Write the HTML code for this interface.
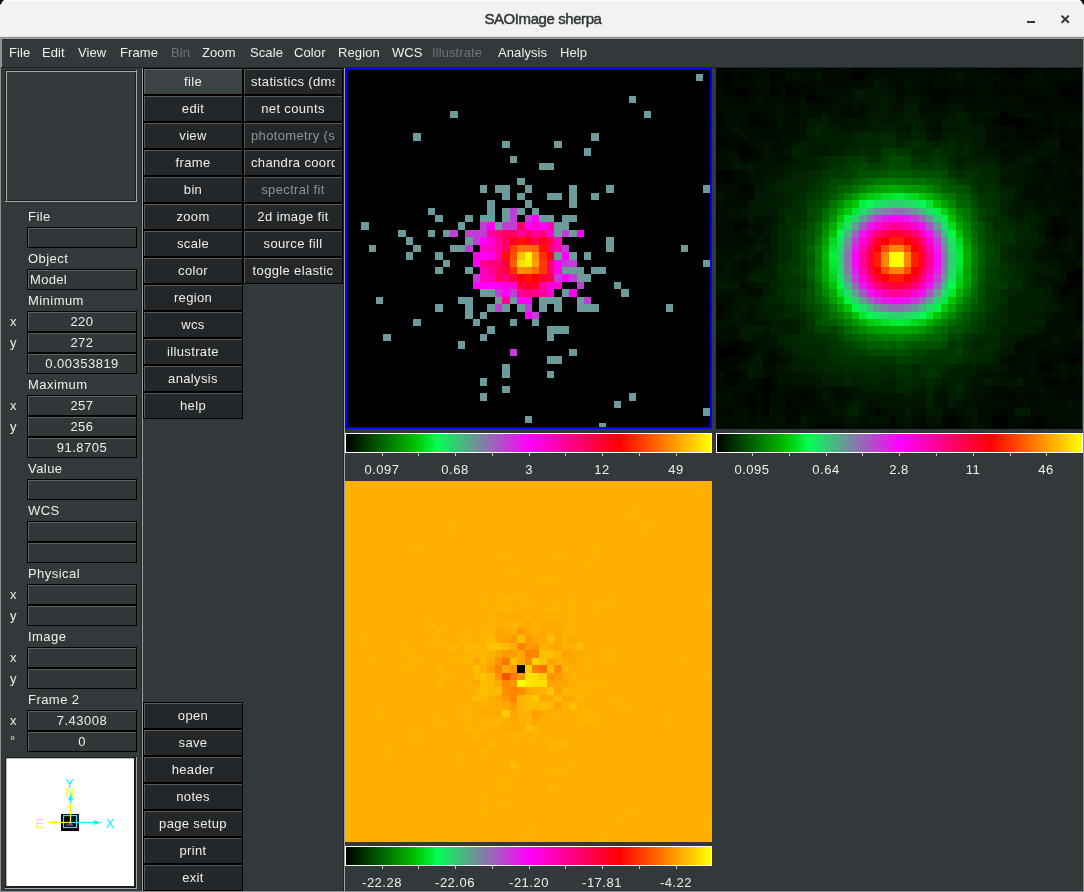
<!DOCTYPE html>
<html><head><meta charset="utf-8"><style>
html,body{margin:0;padding:0;width:1084px;height:892px;overflow:hidden;background:#000;}
body{position:relative;font-family:"Liberation Sans", sans-serif;-webkit-font-smoothing:antialiased;}
.t{will-change:transform;}
body div, body svg{position:absolute;}
div div{position:absolute;}
</style></head><body>
<div style="left:0px;top:0px;width:1084px;height:38px;background:#f2f2f2;"></div><div style="left:0px;top:0px;width:1084px;height:1px;background:#ffffff;"></div><svg style="left:0;top:0" width="1084" height="6"><path d="M0 0H4.2Q1.5 1.2 1 4.2L0 4.5Z" fill="#000"/><path d="M1084 0H1079.8Q1082.5 1.2 1083 4.2L1084 4.5Z" fill="#000"/></svg><div class="t" style="left:392.5px;width:300px;text-align:center;top:11.30px;font-size:15px;line-height:15px;color:#2e3436;letter-spacing:-0.42px;font-weight:normal;-webkit-text-stroke:0.45px #2e3436;">SAOImage sherpa</div><div style="left:1027px;top:21px;width:8px;height:2px;background:#2e3436;"></div><svg style="left:1060px;top:14px" width="11" height="11"><path d="M1.6 1.6L8.8 8.8M8.8 1.6L1.6 8.8" stroke="#2e3436" stroke-width="2"/></svg><div style="left:0px;top:36px;width:1084px;height:1px;background:#e8e8e6;"></div><div style="left:0px;top:37px;width:1084px;height:1px;background:#8b8b87;"></div><div style="left:0px;top:38px;width:1084px;height:854px;background:#33393b;"></div><div style="left:0px;top:38px;width:1px;height:854px;background:#8e8e8e;"></div><div style="left:1083px;top:38px;width:1px;height:854px;background:#8e8e8e;"></div><div style="left:0px;top:891px;width:1084px;height:1px;background:#8e8e8e;"></div><div style="left:1px;top:38px;width:1px;height:30px;background:#9a9a9a;"></div><div style="left:1px;top:38px;width:1082px;height:1px;background:#a2a6a7;"></div><div style="left:2px;top:39px;width:1081px;height:1px;background:#2c3133;"></div><div style="left:2px;top:40px;width:1081px;height:27px;background:#33393b;"></div><div style="left:1px;top:67px;width:1082px;height:1px;background:#1f2426;"></div><div class="t" style="left:9.2px;top:46.00px;font-size:13px;line-height:13px;color:#eeeeec;letter-spacing:0.1px;font-weight:normal;">File</div><div class="t" style="left:42.0px;top:46.00px;font-size:13px;line-height:13px;color:#eeeeec;letter-spacing:0.1px;font-weight:normal;">Edit</div><div class="t" style="left:78.2px;top:46.00px;font-size:13px;line-height:13px;color:#eeeeec;letter-spacing:0.1px;font-weight:normal;">View</div><div class="t" style="left:119.5px;top:46.00px;font-size:13px;line-height:13px;color:#eeeeec;letter-spacing:0.1px;font-weight:normal;">Frame</div><div class="t" style="left:171.0px;top:46.00px;font-size:13px;line-height:13px;color:#6f7374;letter-spacing:0.1px;font-weight:normal;">Bin</div><div class="t" style="left:202.29999999999998px;top:46.00px;font-size:13px;line-height:13px;color:#eeeeec;letter-spacing:0.1px;font-weight:normal;">Zoom</div><div class="t" style="left:249.5px;top:46.00px;font-size:13px;line-height:13px;color:#eeeeec;letter-spacing:0.1px;font-weight:normal;">Scale</div><div class="t" style="left:294.2px;top:46.00px;font-size:13px;line-height:13px;color:#eeeeec;letter-spacing:0.1px;font-weight:normal;">Color</div><div class="t" style="left:337.7px;top:46.00px;font-size:13px;line-height:13px;color:#eeeeec;letter-spacing:0.1px;font-weight:normal;">Region</div><div class="t" style="left:391.5px;top:46.00px;font-size:13px;line-height:13px;color:#eeeeec;letter-spacing:0.1px;font-weight:normal;">WCS</div><div class="t" style="left:432.09999999999997px;top:46.00px;font-size:13px;line-height:13px;color:#6f7374;letter-spacing:0.1px;font-weight:normal;">Illustrate</div><div class="t" style="left:498.4px;top:46.00px;font-size:13px;line-height:13px;color:#eeeeec;letter-spacing:0.1px;font-weight:normal;">Analysis</div><div class="t" style="left:559.6px;top:46.00px;font-size:13px;line-height:13px;color:#eeeeec;letter-spacing:0.1px;font-weight:normal;">Help</div><div style="left:5px;top:70px;width:132px;height:132px;background:#a4a8a9;"></div><div style="left:5px;top:70px;width:131px;height:131px;background:#1b1f20;"></div><div style="left:6px;top:71px;width:130px;height:130px;background:#a4a8a9;"></div><div style="left:7px;top:72px;width:129px;height:129px;background:#1b1f20;"></div><div style="left:7px;top:72px;width:128px;height:128px;background:#33393b;"></div><div class="t" style="left:28px;top:210.00px;font-size:13px;line-height:13px;color:#eeeeec;letter-spacing:0.45px;font-weight:normal;">File</div><div class="t" style="left:28px;top:252.00px;font-size:13px;line-height:13px;color:#eeeeec;letter-spacing:0.45px;font-weight:normal;">Object</div><div class="t" style="left:28px;top:294.00px;font-size:13px;line-height:13px;color:#eeeeec;letter-spacing:0.45px;font-weight:normal;">Minimum</div><div class="t" style="left:28px;top:378.00px;font-size:13px;line-height:13px;color:#eeeeec;letter-spacing:0.45px;font-weight:normal;">Maximum</div><div class="t" style="left:28px;top:462.00px;font-size:13px;line-height:13px;color:#eeeeec;letter-spacing:0.45px;font-weight:normal;">Value</div><div class="t" style="left:28px;top:504.00px;font-size:13px;line-height:13px;color:#eeeeec;letter-spacing:0.45px;font-weight:normal;">WCS</div><div class="t" style="left:28px;top:567.00px;font-size:13px;line-height:13px;color:#eeeeec;letter-spacing:0.45px;font-weight:normal;">Physical</div><div class="t" style="left:28px;top:630.00px;font-size:13px;line-height:13px;color:#eeeeec;letter-spacing:0.45px;font-weight:normal;">Image</div><div class="t" style="left:28px;top:693.00px;font-size:13px;line-height:13px;color:#eeeeec;letter-spacing:0.45px;font-weight:normal;">Frame 2</div><div style="left:27px;top:227px;width:110px;height:21px;background:#000000;"></div><div style="left:28px;top:228px;width:108px;height:19px;background:#5b6062;"></div><div style="left:29px;top:229px;width:107px;height:18px;background:#313638;"></div><div style="left:27px;top:269px;width:110px;height:21px;background:#000000;"></div><div style="left:28px;top:270px;width:108px;height:19px;background:#5b6062;"></div><div style="left:29px;top:271px;width:107px;height:18px;background:#313638;"></div><div class="t" style="left:30px;top:273.00px;font-size:13px;line-height:13px;color:#eeeeec;letter-spacing:0.3px;font-weight:normal;">Model</div><div style="left:27px;top:311px;width:110px;height:21px;background:#000000;"></div><div style="left:28px;top:312px;width:108px;height:19px;background:#5b6062;"></div><div style="left:29px;top:313px;width:107px;height:18px;background:#313638;"></div><div class="t" style="left:-68px;width:300px;text-align:center;top:315.00px;font-size:13px;line-height:13px;color:#eeeeec;letter-spacing:0.5px;font-weight:normal;">220</div><div style="left:27px;top:332px;width:110px;height:21px;background:#000000;"></div><div style="left:28px;top:333px;width:108px;height:19px;background:#5b6062;"></div><div style="left:29px;top:334px;width:107px;height:18px;background:#313638;"></div><div class="t" style="left:-68px;width:300px;text-align:center;top:336.00px;font-size:13px;line-height:13px;color:#eeeeec;letter-spacing:0.5px;font-weight:normal;">272</div><div style="left:27px;top:353px;width:110px;height:21px;background:#000000;"></div><div style="left:28px;top:354px;width:108px;height:19px;background:#5b6062;"></div><div style="left:29px;top:355px;width:107px;height:18px;background:#313638;"></div><div class="t" style="left:-68px;width:300px;text-align:center;top:357.00px;font-size:13px;line-height:13px;color:#eeeeec;letter-spacing:0.5px;font-weight:normal;">0.00353819</div><div style="left:27px;top:395px;width:110px;height:21px;background:#000000;"></div><div style="left:28px;top:396px;width:108px;height:19px;background:#5b6062;"></div><div style="left:29px;top:397px;width:107px;height:18px;background:#313638;"></div><div class="t" style="left:-68px;width:300px;text-align:center;top:399.00px;font-size:13px;line-height:13px;color:#eeeeec;letter-spacing:0.5px;font-weight:normal;">257</div><div style="left:27px;top:416px;width:110px;height:21px;background:#000000;"></div><div style="left:28px;top:417px;width:108px;height:19px;background:#5b6062;"></div><div style="left:29px;top:418px;width:107px;height:18px;background:#313638;"></div><div class="t" style="left:-68px;width:300px;text-align:center;top:420.00px;font-size:13px;line-height:13px;color:#eeeeec;letter-spacing:0.5px;font-weight:normal;">256</div><div style="left:27px;top:437px;width:110px;height:21px;background:#000000;"></div><div style="left:28px;top:438px;width:108px;height:19px;background:#5b6062;"></div><div style="left:29px;top:439px;width:107px;height:18px;background:#313638;"></div><div class="t" style="left:-68px;width:300px;text-align:center;top:441.00px;font-size:13px;line-height:13px;color:#eeeeec;letter-spacing:0.5px;font-weight:normal;">91.8705</div><div style="left:27px;top:479px;width:110px;height:21px;background:#000000;"></div><div style="left:28px;top:480px;width:108px;height:19px;background:#5b6062;"></div><div style="left:29px;top:481px;width:107px;height:18px;background:#313638;"></div><div style="left:27px;top:521px;width:110px;height:21px;background:#000000;"></div><div style="left:28px;top:522px;width:108px;height:19px;background:#5b6062;"></div><div style="left:29px;top:523px;width:107px;height:18px;background:#313638;"></div><div style="left:27px;top:542px;width:110px;height:21px;background:#000000;"></div><div style="left:28px;top:543px;width:108px;height:19px;background:#5b6062;"></div><div style="left:29px;top:544px;width:107px;height:18px;background:#313638;"></div><div style="left:27px;top:584px;width:110px;height:21px;background:#000000;"></div><div style="left:28px;top:585px;width:108px;height:19px;background:#5b6062;"></div><div style="left:29px;top:586px;width:107px;height:18px;background:#313638;"></div><div style="left:27px;top:605px;width:110px;height:21px;background:#000000;"></div><div style="left:28px;top:606px;width:108px;height:19px;background:#5b6062;"></div><div style="left:29px;top:607px;width:107px;height:18px;background:#313638;"></div><div style="left:27px;top:647px;width:110px;height:21px;background:#000000;"></div><div style="left:28px;top:648px;width:108px;height:19px;background:#5b6062;"></div><div style="left:29px;top:649px;width:107px;height:18px;background:#313638;"></div><div style="left:27px;top:668px;width:110px;height:21px;background:#000000;"></div><div style="left:28px;top:669px;width:108px;height:19px;background:#5b6062;"></div><div style="left:29px;top:670px;width:107px;height:18px;background:#313638;"></div><div style="left:27px;top:710px;width:110px;height:21px;background:#000000;"></div><div style="left:28px;top:711px;width:108px;height:19px;background:#5b6062;"></div><div style="left:29px;top:712px;width:107px;height:18px;background:#313638;"></div><div class="t" style="left:-68px;width:300px;text-align:center;top:714.00px;font-size:13px;line-height:13px;color:#eeeeec;letter-spacing:0.5px;font-weight:normal;">7.43008</div><div style="left:27px;top:731px;width:110px;height:21px;background:#000000;"></div><div style="left:28px;top:732px;width:108px;height:19px;background:#5b6062;"></div><div style="left:29px;top:733px;width:107px;height:18px;background:#313638;"></div><div class="t" style="left:-68px;width:300px;text-align:center;top:735.00px;font-size:13px;line-height:13px;color:#eeeeec;letter-spacing:0.5px;font-weight:normal;">0</div><div class="t" style="left:10px;top:315.00px;font-size:13px;line-height:13px;color:#eeeeec;letter-spacing:0px;font-weight:normal;">x</div><div class="t" style="left:10px;top:336.00px;font-size:13px;line-height:13px;color:#eeeeec;letter-spacing:0px;font-weight:normal;">y</div><div class="t" style="left:10px;top:399.00px;font-size:13px;line-height:13px;color:#eeeeec;letter-spacing:0px;font-weight:normal;">x</div><div class="t" style="left:10px;top:420.00px;font-size:13px;line-height:13px;color:#eeeeec;letter-spacing:0px;font-weight:normal;">y</div><div class="t" style="left:10px;top:588.00px;font-size:13px;line-height:13px;color:#eeeeec;letter-spacing:0px;font-weight:normal;">x</div><div class="t" style="left:10px;top:609.00px;font-size:13px;line-height:13px;color:#eeeeec;letter-spacing:0px;font-weight:normal;">y</div><div class="t" style="left:10px;top:651.00px;font-size:13px;line-height:13px;color:#eeeeec;letter-spacing:0px;font-weight:normal;">x</div><div class="t" style="left:10px;top:672.00px;font-size:13px;line-height:13px;color:#eeeeec;letter-spacing:0px;font-weight:normal;">y</div><div class="t" style="left:10px;top:714.00px;font-size:13px;line-height:13px;color:#eeeeec;letter-spacing:0px;font-weight:normal;">x</div><div class="t" style="left:10px;top:734.00px;font-size:13px;line-height:13px;color:#eeeeec;letter-spacing:0px;font-weight:normal;">°</div><div style="left:5px;top:757px;width:132px;height:132px;background:#a4a8a9;"></div><div style="left:5px;top:757px;width:131px;height:131px;background:#1b1f20;"></div><div style="left:6px;top:758px;width:128px;height:128px;background:#b8bcbd;"></div><div style="left:7px;top:759px;width:127px;height:127px;background:#ffffff;"></div><svg style="left:0;top:740px" width="140" height="100">
<rect x="61" y="74" width="18" height="17" fill="#000"/>
<rect x="63.5" y="75.5" width="13" height="12" fill="none" stroke="#00ffff" stroke-width="1.2"/>
<path d="M70.5 82.5H101" stroke="#00ffff" stroke-width="1.3"/>
<path d="M94 80.5L98.5 82.5L94 84.5Z" fill="#00ffff" stroke="#00ffff" stroke-width="1"/>
<path d="M70.5 63V51.5" stroke="#00ffff" stroke-width="1.3"/>
<path d="M68.5 59.5L70.5 55.5L72.5 59.5Z" fill="#00ffff" stroke="#00ffff" stroke-width="1"/>
<path d="M70.5 82.5H48" stroke="#ffff00" stroke-width="1.3"/>
<path d="M55.5 80.5L51 82.5L55.5 84.5Z" fill="#ffff00" stroke="#ffff00" stroke-width="1"/>
<path d="M70.5 82.5V63" stroke="#ffff00" stroke-width="1.3"/>
<path d="M68.5 67.5L70.5 63.5L72.5 67.5Z" fill="#ffff00" stroke="#ffff00" stroke-width="1"/>
<path d="M66 85H73" stroke="#8a9aa0" stroke-width="1"/>
<rect x="69" y="83" width="3" height="2" fill="#ff00ff"/>
<text x="106" y="88" font-size="12.5" fill="#00ffff" font-family="Liberation Sans">X</text>
<text x="35.5" y="88" font-size="12.5" fill="#ffff00" font-family="Liberation Sans">E</text>
<text x="65.5" y="57" font-size="12.5" fill="#ffff00" font-family="Liberation Sans">N</text>
<text x="65.5" y="48" font-size="12.5" fill="#00ffff" font-family="Liberation Sans">Y</text>
</svg><div style="left:141px;top:68px;width:1px;height:823px;background:#23282a;"></div><div style="left:142px;top:68px;width:1px;height:823px;background:#9ea2a3;"></div><div style="left:143px;top:68px;width:100px;height:27px;background:#000000;"></div><div style="left:144px;top:69px;width:98px;height:25px;background:#63686a;"></div><div style="left:145px;top:70px;width:97px;height:24px;background:#3d4245;"></div><div class="t" style="left:43.0px;width:300px;text-align:center;top:74.70px;font-size:13px;line-height:13px;color:#eeeeec;letter-spacing:0.35px;font-weight:normal;">file</div><div style="left:143px;top:95px;width:100px;height:27px;background:#000000;"></div><div style="left:144px;top:96px;width:98px;height:25px;background:#565a5c;"></div><div style="left:145px;top:97px;width:97px;height:24px;background:#232729;"></div><div class="t" style="left:43.0px;width:300px;text-align:center;top:101.70px;font-size:13px;line-height:13px;color:#eeeeec;letter-spacing:0.35px;font-weight:normal;">edit</div><div style="left:143px;top:122px;width:100px;height:27px;background:#000000;"></div><div style="left:144px;top:123px;width:98px;height:25px;background:#565a5c;"></div><div style="left:145px;top:124px;width:97px;height:24px;background:#232729;"></div><div class="t" style="left:43.0px;width:300px;text-align:center;top:128.70px;font-size:13px;line-height:13px;color:#eeeeec;letter-spacing:0.35px;font-weight:normal;">view</div><div style="left:143px;top:149px;width:100px;height:27px;background:#000000;"></div><div style="left:144px;top:150px;width:98px;height:25px;background:#565a5c;"></div><div style="left:145px;top:151px;width:97px;height:24px;background:#232729;"></div><div class="t" style="left:43.0px;width:300px;text-align:center;top:155.70px;font-size:13px;line-height:13px;color:#eeeeec;letter-spacing:0.35px;font-weight:normal;">frame</div><div style="left:143px;top:176px;width:100px;height:27px;background:#000000;"></div><div style="left:144px;top:177px;width:98px;height:25px;background:#565a5c;"></div><div style="left:145px;top:178px;width:97px;height:24px;background:#232729;"></div><div class="t" style="left:43.0px;width:300px;text-align:center;top:182.70px;font-size:13px;line-height:13px;color:#eeeeec;letter-spacing:0.35px;font-weight:normal;">bin</div><div style="left:143px;top:203px;width:100px;height:27px;background:#000000;"></div><div style="left:144px;top:204px;width:98px;height:25px;background:#565a5c;"></div><div style="left:145px;top:205px;width:97px;height:24px;background:#232729;"></div><div class="t" style="left:43.0px;width:300px;text-align:center;top:209.70px;font-size:13px;line-height:13px;color:#eeeeec;letter-spacing:0.35px;font-weight:normal;">zoom</div><div style="left:143px;top:230px;width:100px;height:27px;background:#000000;"></div><div style="left:144px;top:231px;width:98px;height:25px;background:#565a5c;"></div><div style="left:145px;top:232px;width:97px;height:24px;background:#232729;"></div><div class="t" style="left:43.0px;width:300px;text-align:center;top:236.70px;font-size:13px;line-height:13px;color:#eeeeec;letter-spacing:0.35px;font-weight:normal;">scale</div><div style="left:143px;top:257px;width:100px;height:27px;background:#000000;"></div><div style="left:144px;top:258px;width:98px;height:25px;background:#565a5c;"></div><div style="left:145px;top:259px;width:97px;height:24px;background:#232729;"></div><div class="t" style="left:43.0px;width:300px;text-align:center;top:263.70px;font-size:13px;line-height:13px;color:#eeeeec;letter-spacing:0.35px;font-weight:normal;">color</div><div style="left:143px;top:284px;width:100px;height:27px;background:#000000;"></div><div style="left:144px;top:285px;width:98px;height:25px;background:#565a5c;"></div><div style="left:145px;top:286px;width:97px;height:24px;background:#232729;"></div><div class="t" style="left:43.0px;width:300px;text-align:center;top:290.70px;font-size:13px;line-height:13px;color:#eeeeec;letter-spacing:0.35px;font-weight:normal;">region</div><div style="left:143px;top:311px;width:100px;height:27px;background:#000000;"></div><div style="left:144px;top:312px;width:98px;height:25px;background:#565a5c;"></div><div style="left:145px;top:313px;width:97px;height:24px;background:#232729;"></div><div class="t" style="left:43.0px;width:300px;text-align:center;top:317.70px;font-size:13px;line-height:13px;color:#eeeeec;letter-spacing:0.35px;font-weight:normal;">wcs</div><div style="left:143px;top:338px;width:100px;height:27px;background:#000000;"></div><div style="left:144px;top:339px;width:98px;height:25px;background:#565a5c;"></div><div style="left:145px;top:340px;width:97px;height:24px;background:#232729;"></div><div class="t" style="left:43.0px;width:300px;text-align:center;top:344.70px;font-size:13px;line-height:13px;color:#eeeeec;letter-spacing:0.35px;font-weight:normal;">illustrate</div><div style="left:143px;top:365px;width:100px;height:27px;background:#000000;"></div><div style="left:144px;top:366px;width:98px;height:25px;background:#565a5c;"></div><div style="left:145px;top:367px;width:97px;height:24px;background:#232729;"></div><div class="t" style="left:43.0px;width:300px;text-align:center;top:371.70px;font-size:13px;line-height:13px;color:#eeeeec;letter-spacing:0.35px;font-weight:normal;">analysis</div><div style="left:143px;top:392px;width:100px;height:27px;background:#000000;"></div><div style="left:144px;top:393px;width:98px;height:25px;background:#565a5c;"></div><div style="left:145px;top:394px;width:97px;height:24px;background:#232729;"></div><div class="t" style="left:43.0px;width:300px;text-align:center;top:398.70px;font-size:13px;line-height:13px;color:#eeeeec;letter-spacing:0.35px;font-weight:normal;">help</div><div style="left:243px;top:68px;width:100px;height:27px;background:#000000;"></div><div style="left:244px;top:69px;width:98px;height:25px;background:#565a5c;"></div><div style="left:245px;top:70px;width:97px;height:24px;background:#232729;"></div><div style="left:251px;top:68px;width:84px;height:27px;overflow:hidden"><div class="t" style="left:0px;top:6.70px;font-size:13px;line-height:13px;color:#eeeeec;letter-spacing:0.35px;white-space:nowrap">statistics (dms</div></div><div style="left:243px;top:95px;width:100px;height:27px;background:#000000;"></div><div style="left:244px;top:96px;width:98px;height:25px;background:#565a5c;"></div><div style="left:245px;top:97px;width:97px;height:24px;background:#232729;"></div><div class="t" style="left:143.0px;width:300px;text-align:center;top:101.70px;font-size:13px;line-height:13px;color:#eeeeec;letter-spacing:0.35px;font-weight:normal;">net counts</div><div style="left:243px;top:122px;width:100px;height:27px;background:#000000;"></div><div style="left:244px;top:123px;width:98px;height:25px;background:#565a5c;"></div><div style="left:245px;top:124px;width:97px;height:24px;background:#232729;"></div><div style="left:251px;top:122px;width:84px;height:27px;overflow:hidden"><div class="t" style="left:0px;top:6.70px;font-size:13px;line-height:13px;color:#8f9394;letter-spacing:0.35px;white-space:nowrap">photometry (s</div></div><div style="left:243px;top:149px;width:100px;height:27px;background:#000000;"></div><div style="left:244px;top:150px;width:98px;height:25px;background:#565a5c;"></div><div style="left:245px;top:151px;width:97px;height:24px;background:#232729;"></div><div style="left:251px;top:149px;width:84px;height:27px;overflow:hidden"><div class="t" style="left:0px;top:6.70px;font-size:13px;line-height:13px;color:#eeeeec;letter-spacing:0.35px;white-space:nowrap">chandra coord</div></div><div style="left:243px;top:176px;width:100px;height:27px;background:#000000;"></div><div style="left:244px;top:177px;width:98px;height:25px;background:#565a5c;"></div><div style="left:245px;top:178px;width:97px;height:24px;background:#232729;"></div><div class="t" style="left:143.0px;width:300px;text-align:center;top:182.70px;font-size:13px;line-height:13px;color:#8f9394;letter-spacing:0.35px;font-weight:normal;">spectral fit</div><div style="left:243px;top:203px;width:100px;height:27px;background:#000000;"></div><div style="left:244px;top:204px;width:98px;height:25px;background:#565a5c;"></div><div style="left:245px;top:205px;width:97px;height:24px;background:#232729;"></div><div class="t" style="left:143.0px;width:300px;text-align:center;top:209.70px;font-size:13px;line-height:13px;color:#eeeeec;letter-spacing:0.35px;font-weight:normal;">2d image fit</div><div style="left:243px;top:230px;width:100px;height:27px;background:#000000;"></div><div style="left:244px;top:231px;width:98px;height:25px;background:#565a5c;"></div><div style="left:245px;top:232px;width:97px;height:24px;background:#232729;"></div><div class="t" style="left:143.0px;width:300px;text-align:center;top:236.70px;font-size:13px;line-height:13px;color:#eeeeec;letter-spacing:0.35px;font-weight:normal;">source fill</div><div style="left:243px;top:257px;width:100px;height:27px;background:#000000;"></div><div style="left:244px;top:258px;width:98px;height:25px;background:#565a5c;"></div><div style="left:245px;top:259px;width:97px;height:24px;background:#232729;"></div><div class="t" style="left:143.0px;width:300px;text-align:center;top:263.70px;font-size:13px;line-height:13px;color:#eeeeec;letter-spacing:0.35px;font-weight:normal;">toggle elastic</div><div style="left:143px;top:702px;width:100px;height:27px;background:#000000;"></div><div style="left:144px;top:703px;width:98px;height:25px;background:#565a5c;"></div><div style="left:145px;top:704px;width:97px;height:24px;background:#232729;"></div><div class="t" style="left:43.0px;width:300px;text-align:center;top:708.70px;font-size:13px;line-height:13px;color:#eeeeec;letter-spacing:0.35px;font-weight:normal;">open</div><div style="left:143px;top:729px;width:100px;height:27px;background:#000000;"></div><div style="left:144px;top:730px;width:98px;height:25px;background:#565a5c;"></div><div style="left:145px;top:731px;width:97px;height:24px;background:#232729;"></div><div class="t" style="left:43.0px;width:300px;text-align:center;top:735.70px;font-size:13px;line-height:13px;color:#eeeeec;letter-spacing:0.35px;font-weight:normal;">save</div><div style="left:143px;top:756px;width:100px;height:27px;background:#000000;"></div><div style="left:144px;top:757px;width:98px;height:25px;background:#565a5c;"></div><div style="left:145px;top:758px;width:97px;height:24px;background:#232729;"></div><div class="t" style="left:43.0px;width:300px;text-align:center;top:762.70px;font-size:13px;line-height:13px;color:#eeeeec;letter-spacing:0.35px;font-weight:normal;">header</div><div style="left:143px;top:783px;width:100px;height:27px;background:#000000;"></div><div style="left:144px;top:784px;width:98px;height:25px;background:#565a5c;"></div><div style="left:145px;top:785px;width:97px;height:24px;background:#232729;"></div><div class="t" style="left:43.0px;width:300px;text-align:center;top:789.70px;font-size:13px;line-height:13px;color:#eeeeec;letter-spacing:0.35px;font-weight:normal;">notes</div><div style="left:143px;top:810px;width:100px;height:27px;background:#000000;"></div><div style="left:144px;top:811px;width:98px;height:25px;background:#565a5c;"></div><div style="left:145px;top:812px;width:97px;height:24px;background:#232729;"></div><div class="t" style="left:43.0px;width:300px;text-align:center;top:816.70px;font-size:13px;line-height:13px;color:#eeeeec;letter-spacing:0.35px;font-weight:normal;">page setup</div><div style="left:143px;top:837px;width:100px;height:27px;background:#000000;"></div><div style="left:144px;top:838px;width:98px;height:25px;background:#565a5c;"></div><div style="left:145px;top:839px;width:97px;height:24px;background:#232729;"></div><div class="t" style="left:43.0px;width:300px;text-align:center;top:843.70px;font-size:13px;line-height:13px;color:#eeeeec;letter-spacing:0.35px;font-weight:normal;">print</div><div style="left:143px;top:864px;width:100px;height:27px;background:#000000;"></div><div style="left:144px;top:865px;width:98px;height:25px;background:#565a5c;"></div><div style="left:145px;top:866px;width:97px;height:24px;background:#232729;"></div><div class="t" style="left:43.0px;width:300px;text-align:center;top:870.70px;font-size:13px;line-height:13px;color:#eeeeec;letter-spacing:0.35px;font-weight:normal;">exit</div><div style="left:343px;top:68px;width:1px;height:823px;background:#1f2325;"></div><div style="left:344px;top:68px;width:1px;height:823px;background:#9ea2a3;"></div><div style="left:345px;top:68px;width:367px;height:361px;background:#0000ff;"></div><div style="left:347px;top:70px;width:363px;height:357px;background:#000000;"></div><div style="left:716px;top:68px;width:366px;height:361px;background:#010a01;"></div><div style="left:345px;top:481px;width:367px;height:361px;background:#ffb000;"></div><div style="left:345px;top:433px;width:367px;height:20px;background:#ffffff;"></div><div style="left:346px;top:434px;width:365px;height:18px;background:linear-gradient(to right,#000000 0%,#00c200 19%,#00ff50 25%,#ff00ff 50%,#ff0000 75%,#ffff00 100%);"></div><div style="left:382px;top:453px;width:1px;height:3px;background:#c8cacb;"></div><div style="left:418px;top:453px;width:1px;height:3px;background:#c8cacb;"></div><div style="left:455px;top:453px;width:1px;height:3px;background:#c8cacb;"></div><div style="left:492px;top:453px;width:1px;height:3px;background:#c8cacb;"></div><div style="left:529px;top:453px;width:1px;height:3px;background:#c8cacb;"></div><div style="left:565px;top:453px;width:1px;height:3px;background:#c8cacb;"></div><div style="left:602px;top:453px;width:1px;height:3px;background:#c8cacb;"></div><div style="left:639px;top:453px;width:1px;height:3px;background:#c8cacb;"></div><div style="left:676px;top:453px;width:1px;height:3px;background:#c8cacb;"></div><div class="t" style="left:231.5px;width:300px;text-align:center;top:463.00px;font-size:13px;line-height:13px;color:#eeeeec;letter-spacing:0.5px;font-weight:normal;">0.097</div><div class="t" style="left:305.04px;width:300px;text-align:center;top:463.00px;font-size:13px;line-height:13px;color:#eeeeec;letter-spacing:0.5px;font-weight:normal;">0.68</div><div class="t" style="left:378.58000000000004px;width:300px;text-align:center;top:463.00px;font-size:13px;line-height:13px;color:#eeeeec;letter-spacing:0.5px;font-weight:normal;">3</div><div class="t" style="left:452.12px;width:300px;text-align:center;top:463.00px;font-size:13px;line-height:13px;color:#eeeeec;letter-spacing:0.5px;font-weight:normal;">12</div><div class="t" style="left:525.6600000000001px;width:300px;text-align:center;top:463.00px;font-size:13px;line-height:13px;color:#eeeeec;letter-spacing:0.5px;font-weight:normal;">49</div><div style="left:716px;top:433px;width:367px;height:20px;background:#ffffff;"></div><div style="left:717px;top:434px;width:365px;height:18px;background:linear-gradient(to right,#000000 0%,#00c200 19%,#00ff50 25%,#ff00ff 50%,#ff0000 75%,#ffff00 100%);"></div><div style="left:752px;top:453px;width:1px;height:3px;background:#c8cacb;"></div><div style="left:789px;top:453px;width:1px;height:3px;background:#c8cacb;"></div><div style="left:826px;top:453px;width:1px;height:3px;background:#c8cacb;"></div><div style="left:862px;top:453px;width:1px;height:3px;background:#c8cacb;"></div><div style="left:899px;top:453px;width:1px;height:3px;background:#c8cacb;"></div><div style="left:936px;top:453px;width:1px;height:3px;background:#c8cacb;"></div><div style="left:973px;top:453px;width:1px;height:3px;background:#c8cacb;"></div><div style="left:1010px;top:453px;width:1px;height:3px;background:#c8cacb;"></div><div style="left:1046px;top:453px;width:1px;height:3px;background:#c8cacb;"></div><div class="t" style="left:602.0px;width:300px;text-align:center;top:463.00px;font-size:13px;line-height:13px;color:#eeeeec;letter-spacing:0.5px;font-weight:normal;">0.095</div><div class="t" style="left:675.6px;width:300px;text-align:center;top:463.00px;font-size:13px;line-height:13px;color:#eeeeec;letter-spacing:0.5px;font-weight:normal;">0.64</div><div class="t" style="left:749.2px;width:300px;text-align:center;top:463.00px;font-size:13px;line-height:13px;color:#eeeeec;letter-spacing:0.5px;font-weight:normal;">2.8</div><div class="t" style="left:822.8px;width:300px;text-align:center;top:463.00px;font-size:13px;line-height:13px;color:#eeeeec;letter-spacing:0.5px;font-weight:normal;">11</div><div class="t" style="left:896.4000000000001px;width:300px;text-align:center;top:463.00px;font-size:13px;line-height:13px;color:#eeeeec;letter-spacing:0.5px;font-weight:normal;">46</div><div style="left:345px;top:846px;width:367px;height:20px;background:#ffffff;"></div><div style="left:346px;top:847px;width:365px;height:18px;background:linear-gradient(to right,#000000 0%,#00c200 19%,#00ff50 25%,#ff00ff 50%,#ff0000 75%,#ffff00 100%);"></div><div style="left:382px;top:866px;width:1px;height:3px;background:#c8cacb;"></div><div style="left:418px;top:866px;width:1px;height:3px;background:#c8cacb;"></div><div style="left:455px;top:866px;width:1px;height:3px;background:#c8cacb;"></div><div style="left:492px;top:866px;width:1px;height:3px;background:#c8cacb;"></div><div style="left:529px;top:866px;width:1px;height:3px;background:#c8cacb;"></div><div style="left:565px;top:866px;width:1px;height:3px;background:#c8cacb;"></div><div style="left:602px;top:866px;width:1px;height:3px;background:#c8cacb;"></div><div style="left:639px;top:866px;width:1px;height:3px;background:#c8cacb;"></div><div style="left:676px;top:866px;width:1px;height:3px;background:#c8cacb;"></div><div class="t" style="left:231.5px;width:300px;text-align:center;top:876.00px;font-size:13px;line-height:13px;color:#eeeeec;letter-spacing:0.5px;font-weight:normal;">-22.28</div><div class="t" style="left:305.04px;width:300px;text-align:center;top:876.00px;font-size:13px;line-height:13px;color:#eeeeec;letter-spacing:0.5px;font-weight:normal;">-22.06</div><div class="t" style="left:378.58000000000004px;width:300px;text-align:center;top:876.00px;font-size:13px;line-height:13px;color:#eeeeec;letter-spacing:0.5px;font-weight:normal;">-21.20</div><div class="t" style="left:452.12px;width:300px;text-align:center;top:876.00px;font-size:13px;line-height:13px;color:#eeeeec;letter-spacing:0.5px;font-weight:normal;">-17.81</div><div class="t" style="left:525.6600000000001px;width:300px;text-align:center;top:876.00px;font-size:13px;line-height:13px;color:#eeeeec;letter-spacing:0.5px;font-weight:normal;">-4.22</div><div style="left:347px;top:70px;width:363px;height:357px;overflow:hidden;background:#000000"><svg width="363" height="357" style="position:absolute;left:0;top:0" shape-rendering="crispEdges"><rect x="349" y="4" width="7" height="7" fill="#6b9b9b"/><rect x="282" y="26" width="7" height="7" fill="#6b9b9b"/><rect x="103" y="41" width="8" height="7" fill="#6b9b9b"/><rect x="297" y="41" width="7" height="7" fill="#6b9b9b"/><rect x="66" y="63" width="8" height="8" fill="#6b9b9b"/><rect x="244" y="63" width="8" height="8" fill="#6b9b9b"/><rect x="155" y="71" width="8" height="7" fill="#6b9b9b"/><rect x="207" y="71" width="8" height="7" fill="#6b9b9b"/><rect x="237" y="78" width="7" height="8" fill="#6b9b9b"/><rect x="163" y="86" width="7" height="7" fill="#6b9b9b"/><rect x="192" y="93" width="15" height="7" fill="#6b9b9b"/><rect x="170" y="108" width="8" height="7" fill="#6b9b9b"/><rect x="133" y="115" width="7" height="8" fill="#6b9b9b"/><rect x="148" y="115" width="15" height="8" fill="#6b9b9b"/><rect x="178" y="115" width="7" height="8" fill="#6b9b9b"/><rect x="222" y="115" width="8" height="8" fill="#6b9b9b"/><rect x="259" y="115" width="8" height="8" fill="#6b9b9b"/><rect x="356" y="115" width="7" height="8" fill="#6b9b9b"/><rect x="155" y="123" width="8" height="7" fill="#6b9b9b"/><rect x="170" y="123" width="8" height="7" fill="#6b9b9b"/><rect x="200" y="123" width="15" height="7" fill="#6b9b9b"/><rect x="222" y="123" width="8" height="7" fill="#6b9b9b"/><rect x="244" y="123" width="8" height="7" fill="#6b9b9b"/><rect x="140" y="130" width="8" height="8" fill="#6b9b9b"/><rect x="178" y="130" width="7" height="8" fill="#6b9b9b"/><rect x="222" y="130" width="8" height="8" fill="#6b9b9b"/><rect x="81" y="138" width="7" height="7" fill="#6b9b9b"/><rect x="140" y="138" width="8" height="7" fill="#6b9b9b"/><rect x="155" y="138" width="8" height="7" fill="#6b9b9b"/><rect x="163" y="138" width="7" height="7" fill="#c23dd6"/><rect x="170" y="138" width="8" height="7" fill="#6b9b9b"/><rect x="185" y="138" width="7" height="7" fill="#6b9b9b"/><rect x="88" y="145" width="8" height="7" fill="#6b9b9b"/><rect x="118" y="145" width="8" height="7" fill="#6b9b9b"/><rect x="133" y="145" width="15" height="7" fill="#6b9b9b"/><rect x="155" y="145" width="8" height="7" fill="#6b9b9b"/><rect x="163" y="145" width="7" height="7" fill="#c23dd6"/><rect x="178" y="145" width="7" height="7" fill="#c23dd6"/><rect x="185" y="145" width="7" height="7" fill="#ff00ff"/><rect x="192" y="145" width="15" height="7" fill="#6b9b9b"/><rect x="215" y="145" width="15" height="7" fill="#6b9b9b"/><rect x="14" y="152" width="8" height="8" fill="#6b9b9b"/><rect x="111" y="152" width="7" height="8" fill="#6b9b9b"/><rect x="133" y="152" width="7" height="8" fill="#c23dd6"/><rect x="140" y="152" width="8" height="8" fill="#ff00ff"/><rect x="148" y="152" width="7" height="8" fill="#6b9b9b"/><rect x="155" y="152" width="15" height="8" fill="#c23dd6"/><rect x="170" y="152" width="8" height="8" fill="#ff0066"/><rect x="178" y="152" width="7" height="8" fill="#ff00ff"/><rect x="185" y="152" width="7" height="8" fill="#ff00d0"/><rect x="192" y="152" width="8" height="8" fill="#ff00ff"/><rect x="200" y="152" width="7" height="8" fill="#ff00b0"/><rect x="207" y="152" width="15" height="8" fill="#6b9b9b"/><rect x="51" y="160" width="8" height="7" fill="#6b9b9b"/><rect x="81" y="160" width="7" height="7" fill="#6b9b9b"/><rect x="96" y="160" width="7" height="7" fill="#6b9b9b"/><rect x="103" y="160" width="8" height="7" fill="#c23dd6"/><rect x="118" y="160" width="22" height="7" fill="#c23dd6"/><rect x="140" y="160" width="8" height="7" fill="#ff00a0"/><rect x="148" y="160" width="7" height="7" fill="#ff0080"/><rect x="155" y="160" width="15" height="7" fill="#ff0060"/><rect x="170" y="160" width="8" height="7" fill="#ff00a0"/><rect x="178" y="160" width="7" height="7" fill="#ff0060"/><rect x="185" y="160" width="7" height="7" fill="#ff00a0"/><rect x="192" y="160" width="8" height="7" fill="#ff0080"/><rect x="200" y="160" width="7" height="7" fill="#ff00e0"/><rect x="207" y="160" width="8" height="7" fill="#6b9b9b"/><rect x="215" y="160" width="7" height="7" fill="#c23dd6"/><rect x="222" y="160" width="8" height="7" fill="#6b9b9b"/><rect x="230" y="160" width="7" height="7" fill="#ff00ff"/><rect x="59" y="167" width="7" height="8" fill="#6b9b9b"/><rect x="118" y="167" width="8" height="8" fill="#6b9b9b"/><rect x="126" y="167" width="7" height="8" fill="#c23dd6"/><rect x="133" y="167" width="7" height="8" fill="#ff00ff"/><rect x="140" y="167" width="8" height="8" fill="#ff00d0"/><rect x="148" y="167" width="7" height="8" fill="#ff00a0"/><rect x="155" y="167" width="8" height="8" fill="#ff0060"/><rect x="163" y="167" width="7" height="8" fill="#ff0020"/><rect x="170" y="167" width="8" height="8" fill="#ff1000"/><rect x="178" y="167" width="7" height="8" fill="#ff0020"/><rect x="185" y="167" width="7" height="8" fill="#ff0040"/><rect x="192" y="167" width="8" height="8" fill="#ff0020"/><rect x="200" y="167" width="7" height="8" fill="#ff0050"/><rect x="207" y="167" width="8" height="8" fill="#ff00c0"/><rect x="259" y="167" width="8" height="8" fill="#6b9b9b"/><rect x="22" y="175" width="7" height="7" fill="#6b9b9b"/><rect x="66" y="175" width="8" height="7" fill="#6b9b9b"/><rect x="103" y="175" width="15" height="7" fill="#6b9b9b"/><rect x="118" y="175" width="8" height="7" fill="#c23dd6"/><rect x="133" y="175" width="7" height="7" fill="#ff00d0"/><rect x="140" y="175" width="8" height="7" fill="#ff00c0"/><rect x="148" y="175" width="7" height="7" fill="#ff00a0"/><rect x="155" y="175" width="8" height="7" fill="#ff0060"/><rect x="163" y="175" width="7" height="7" fill="#ff4000"/><rect x="170" y="175" width="15" height="7" fill="#ff7000"/><rect x="185" y="175" width="7" height="7" fill="#ff6000"/><rect x="192" y="175" width="8" height="7" fill="#ff1000"/><rect x="200" y="175" width="7" height="7" fill="#ff0070"/><rect x="207" y="175" width="8" height="7" fill="#ff00b0"/><rect x="215" y="175" width="7" height="7" fill="#c23dd6"/><rect x="259" y="175" width="8" height="7" fill="#6b9b9b"/><rect x="334" y="175" width="7" height="7" fill="#6b9b9b"/><rect x="59" y="182" width="7" height="8" fill="#6b9b9b"/><rect x="88" y="182" width="8" height="8" fill="#6b9b9b"/><rect x="126" y="182" width="7" height="8" fill="#ff00e0"/><rect x="133" y="182" width="7" height="8" fill="#ff00ff"/><rect x="140" y="182" width="8" height="8" fill="#ff00e8"/><rect x="148" y="182" width="7" height="8" fill="#ff00a0"/><rect x="155" y="182" width="8" height="8" fill="#ff1000"/><rect x="163" y="182" width="7" height="8" fill="#ff5000"/><rect x="170" y="182" width="8" height="8" fill="#ffc000"/><rect x="178" y="182" width="7" height="8" fill="#ffff00"/><rect x="185" y="182" width="7" height="8" fill="#ff9000"/><rect x="192" y="182" width="8" height="8" fill="#ff3000"/><rect x="200" y="182" width="7" height="8" fill="#ff0020"/><rect x="207" y="182" width="8" height="8" fill="#6b9b9b"/><rect x="215" y="182" width="7" height="8" fill="#ff00ff"/><rect x="222" y="182" width="8" height="8" fill="#6b9b9b"/><rect x="237" y="182" width="7" height="8" fill="#6b9b9b"/><rect x="96" y="190" width="7" height="7" fill="#6b9b9b"/><rect x="126" y="190" width="7" height="7" fill="#ff00ff"/><rect x="133" y="190" width="7" height="7" fill="#ff0090"/><rect x="140" y="190" width="8" height="7" fill="#ff0080"/><rect x="148" y="190" width="7" height="7" fill="#ff0070"/><rect x="155" y="190" width="8" height="7" fill="#ff0040"/><rect x="163" y="190" width="7" height="7" fill="#ff6000"/><rect x="170" y="190" width="8" height="7" fill="#ffe000"/><rect x="178" y="190" width="7" height="7" fill="#fff000"/><rect x="185" y="190" width="7" height="7" fill="#ffa000"/><rect x="192" y="190" width="8" height="7" fill="#ff3800"/><rect x="200" y="190" width="7" height="7" fill="#ff0070"/><rect x="207" y="190" width="8" height="7" fill="#ff00f0"/><rect x="215" y="190" width="15" height="7" fill="#c23dd6"/><rect x="356" y="190" width="7" height="7" fill="#6b9b9b"/><rect x="88" y="197" width="8" height="7" fill="#6b9b9b"/><rect x="118" y="197" width="8" height="7" fill="#6b9b9b"/><rect x="133" y="197" width="7" height="7" fill="#ff00c0"/><rect x="140" y="197" width="8" height="7" fill="#ff0090"/><rect x="148" y="197" width="7" height="7" fill="#ff0060"/><rect x="155" y="197" width="8" height="7" fill="#ff0040"/><rect x="163" y="197" width="7" height="7" fill="#ff3000"/><rect x="170" y="197" width="8" height="7" fill="#ff9000"/><rect x="178" y="197" width="7" height="7" fill="#ff8800"/><rect x="185" y="197" width="7" height="7" fill="#ff6a00"/><rect x="192" y="197" width="8" height="7" fill="#ff3800"/><rect x="200" y="197" width="7" height="7" fill="#ff0070"/><rect x="207" y="197" width="8" height="7" fill="#ff00f0"/><rect x="215" y="197" width="22" height="7" fill="#6b9b9b"/><rect x="244" y="197" width="15" height="7" fill="#6b9b9b"/><rect x="126" y="204" width="7" height="8" fill="#c23dd6"/><rect x="133" y="204" width="7" height="8" fill="#ff00c0"/><rect x="140" y="204" width="8" height="8" fill="#ff00b0"/><rect x="148" y="204" width="7" height="8" fill="#ff0060"/><rect x="155" y="204" width="8" height="8" fill="#ff0080"/><rect x="163" y="204" width="7" height="8" fill="#ff0040"/><rect x="170" y="204" width="8" height="8" fill="#ff0010"/><rect x="178" y="204" width="7" height="8" fill="#ff1000"/><rect x="185" y="204" width="7" height="8" fill="#ff0008"/><rect x="192" y="204" width="8" height="8" fill="#ff0030"/><rect x="200" y="204" width="7" height="8" fill="#ff0050"/><rect x="207" y="204" width="8" height="8" fill="#c23dd6"/><rect x="215" y="204" width="7" height="8" fill="#ff00ff"/><rect x="222" y="204" width="8" height="8" fill="#c23dd6"/><rect x="230" y="204" width="14" height="8" fill="#6b9b9b"/><rect x="126" y="212" width="29" height="7" fill="#ff00ff"/><rect x="155" y="212" width="15" height="7" fill="#ff00d8"/><rect x="170" y="212" width="8" height="7" fill="#ff0030"/><rect x="178" y="212" width="14" height="7" fill="#ff0020"/><rect x="192" y="212" width="8" height="7" fill="#ff00a0"/><rect x="200" y="212" width="15" height="7" fill="#ff00d8"/><rect x="230" y="212" width="7" height="7" fill="#c23dd6"/><rect x="267" y="212" width="7" height="7" fill="#6b9b9b"/><rect x="133" y="219" width="15" height="8" fill="#6b9b9b"/><rect x="148" y="219" width="7" height="8" fill="#c23dd6"/><rect x="155" y="219" width="8" height="8" fill="#ff00ff"/><rect x="163" y="219" width="7" height="8" fill="#c23dd6"/><rect x="170" y="219" width="8" height="8" fill="#ff0090"/><rect x="178" y="219" width="7" height="8" fill="#ff0070"/><rect x="185" y="219" width="7" height="8" fill="#ff0090"/><rect x="192" y="219" width="8" height="8" fill="#ff00a0"/><rect x="200" y="219" width="7" height="8" fill="#ff00e0"/><rect x="215" y="219" width="7" height="8" fill="#6b9b9b"/><rect x="222" y="219" width="8" height="8" fill="#ff00ff"/><rect x="274" y="219" width="8" height="8" fill="#6b9b9b"/><rect x="29" y="227" width="7" height="7" fill="#6b9b9b"/><rect x="111" y="227" width="15" height="7" fill="#6b9b9b"/><rect x="148" y="227" width="7" height="7" fill="#6b9b9b"/><rect x="155" y="227" width="8" height="7" fill="#ff0090"/><rect x="163" y="227" width="7" height="7" fill="#6b9b9b"/><rect x="170" y="227" width="15" height="7" fill="#ff00ff"/><rect x="192" y="227" width="23" height="7" fill="#6b9b9b"/><rect x="230" y="227" width="7" height="7" fill="#6b9b9b"/><rect x="237" y="227" width="7" height="7" fill="#c23dd6"/><rect x="88" y="234" width="8" height="8" fill="#6b9b9b"/><rect x="118" y="234" width="8" height="8" fill="#6b9b9b"/><rect x="140" y="234" width="8" height="8" fill="#6b9b9b"/><rect x="148" y="234" width="7" height="8" fill="#c23dd6"/><rect x="155" y="234" width="8" height="8" fill="#6b9b9b"/><rect x="170" y="234" width="8" height="8" fill="#6b9b9b"/><rect x="178" y="234" width="7" height="8" fill="#c23dd6"/><rect x="192" y="234" width="8" height="8" fill="#6b9b9b"/><rect x="207" y="234" width="8" height="8" fill="#6b9b9b"/><rect x="230" y="234" width="22" height="8" fill="#6b9b9b"/><rect x="319" y="234" width="7" height="8" fill="#6b9b9b"/><rect x="118" y="242" width="8" height="7" fill="#6b9b9b"/><rect x="133" y="242" width="7" height="7" fill="#6b9b9b"/><rect x="178" y="242" width="7" height="7" fill="#ff00ff"/><rect x="185" y="242" width="7" height="7" fill="#c23dd6"/><rect x="66" y="249" width="8" height="7" fill="#6b9b9b"/><rect x="126" y="249" width="7" height="7" fill="#6b9b9b"/><rect x="163" y="249" width="7" height="7" fill="#6b9b9b"/><rect x="185" y="249" width="7" height="7" fill="#6b9b9b"/><rect x="140" y="256" width="8" height="8" fill="#6b9b9b"/><rect x="200" y="256" width="22" height="8" fill="#6b9b9b"/><rect x="36" y="264" width="8" height="7" fill="#6b9b9b"/><rect x="133" y="264" width="7" height="7" fill="#6b9b9b"/><rect x="200" y="264" width="7" height="7" fill="#6b9b9b"/><rect x="111" y="271" width="7" height="8" fill="#6b9b9b"/><rect x="163" y="279" width="7" height="7" fill="#c23dd6"/><rect x="222" y="279" width="8" height="7" fill="#6b9b9b"/><rect x="200" y="286" width="15" height="8" fill="#6b9b9b"/><rect x="155" y="294" width="8" height="7" fill="#6b9b9b"/><rect x="155" y="301" width="8" height="7" fill="#6b9b9b"/><rect x="200" y="301" width="7" height="7" fill="#6b9b9b"/><rect x="133" y="308" width="7" height="8" fill="#6b9b9b"/><rect x="155" y="316" width="8" height="7" fill="#6b9b9b"/><rect x="133" y="323" width="7" height="8" fill="#6b9b9b"/><rect x="282" y="323" width="7" height="8" fill="#6b9b9b"/><rect x="267" y="331" width="7" height="7" fill="#6b9b9b"/><rect x="356" y="338" width="7" height="8" fill="#6b9b9b"/><rect x="178" y="346" width="7" height="7" fill="#6b9b9b"/><rect x="252" y="353" width="7" height="7" fill="#6b9b9b"/></svg></div><div style="left:716px;top:68px;width:366px;height:361px;overflow:hidden;background:#000000"><svg width="366" height="361" style="position:absolute;left:0;top:0" shape-rendering="crispEdges"><rect x="-5" y="-2" width="14" height="8" fill="#000800"/><rect x="9" y="-2" width="8" height="8" fill="#000400"/><rect x="17" y="-2" width="7" height="8" fill="#000c00"/><rect x="24" y="-2" width="15" height="8" fill="#000800"/><rect x="39" y="-2" width="15" height="8" fill="#000c00"/><rect x="54" y="-2" width="15" height="8" fill="#000800"/><rect x="69" y="-2" width="7" height="8" fill="#000c00"/><rect x="76" y="-2" width="8" height="8" fill="#001000"/><rect x="84" y="-2" width="7" height="8" fill="#000c00"/><rect x="91" y="-2" width="15" height="8" fill="#001000"/><rect x="106" y="-2" width="15" height="8" fill="#000800"/><rect x="121" y="-2" width="15" height="8" fill="#000c00"/><rect x="136" y="-2" width="22" height="8" fill="#000400"/><rect x="158" y="-2" width="7" height="8" fill="#000c00"/><rect x="165" y="-2" width="15" height="8" fill="#000800"/><rect x="180" y="-2" width="45" height="8" fill="#000c00"/><rect x="225" y="-2" width="7" height="8" fill="#000800"/><rect x="232" y="-2" width="15" height="8" fill="#001000"/><rect x="247" y="-2" width="8" height="8" fill="#000c00"/><rect x="255" y="-2" width="7" height="8" fill="#001000"/><rect x="262" y="-2" width="22" height="8" fill="#000800"/><rect x="284" y="-2" width="8" height="8" fill="#000400"/><rect x="299" y="-2" width="8" height="8" fill="#000400"/><rect x="314" y="-2" width="22" height="8" fill="#000800"/><rect x="336" y="-2" width="8" height="8" fill="#000400"/><rect x="344" y="-2" width="15" height="8" fill="#000800"/><rect x="359" y="-2" width="7" height="8" fill="#000c00"/><rect x="-5" y="6" width="7" height="7" fill="#000c00"/><rect x="2" y="6" width="7" height="7" fill="#000800"/><rect x="17" y="6" width="7" height="7" fill="#000800"/><rect x="24" y="6" width="8" height="7" fill="#000400"/><rect x="32" y="6" width="7" height="7" fill="#000800"/><rect x="39" y="6" width="15" height="7" fill="#000c00"/><rect x="54" y="6" width="15" height="7" fill="#000400"/><rect x="69" y="6" width="30" height="7" fill="#001000"/><rect x="99" y="6" width="7" height="7" fill="#001400"/><rect x="106" y="6" width="30" height="7" fill="#000800"/><rect x="143" y="6" width="8" height="7" fill="#000400"/><rect x="151" y="6" width="7" height="7" fill="#000c00"/><rect x="158" y="6" width="15" height="7" fill="#001000"/><rect x="173" y="6" width="7" height="7" fill="#000800"/><rect x="180" y="6" width="8" height="7" fill="#000c00"/><rect x="188" y="6" width="7" height="7" fill="#001000"/><rect x="195" y="6" width="15" height="7" fill="#000c00"/><rect x="210" y="6" width="7" height="7" fill="#000800"/><rect x="217" y="6" width="15" height="7" fill="#000c00"/><rect x="232" y="6" width="8" height="7" fill="#001000"/><rect x="240" y="6" width="7" height="7" fill="#001400"/><rect x="247" y="6" width="8" height="7" fill="#001000"/><rect x="255" y="6" width="22" height="7" fill="#000c00"/><rect x="277" y="6" width="7" height="7" fill="#001000"/><rect x="284" y="6" width="15" height="7" fill="#000800"/><rect x="299" y="6" width="8" height="7" fill="#000400"/><rect x="307" y="6" width="14" height="7" fill="#000c00"/><rect x="321" y="6" width="8" height="7" fill="#001000"/><rect x="329" y="6" width="15" height="7" fill="#000800"/><rect x="344" y="6" width="7" height="7" fill="#000c00"/><rect x="351" y="6" width="8" height="7" fill="#001000"/><rect x="359" y="6" width="7" height="7" fill="#000800"/><rect x="-5" y="13" width="7" height="8" fill="#000c00"/><rect x="2" y="13" width="7" height="8" fill="#000800"/><rect x="9" y="13" width="8" height="8" fill="#000400"/><rect x="17" y="13" width="22" height="8" fill="#000800"/><rect x="39" y="13" width="15" height="8" fill="#001000"/><rect x="54" y="13" width="15" height="8" fill="#000800"/><rect x="69" y="13" width="7" height="8" fill="#000400"/><rect x="76" y="13" width="23" height="8" fill="#000800"/><rect x="99" y="13" width="7" height="8" fill="#000c00"/><rect x="106" y="13" width="15" height="8" fill="#000800"/><rect x="121" y="13" width="7" height="8" fill="#000c00"/><rect x="128" y="13" width="8" height="8" fill="#000800"/><rect x="136" y="13" width="22" height="8" fill="#000c00"/><rect x="158" y="13" width="7" height="8" fill="#001900"/><rect x="165" y="13" width="15" height="8" fill="#001000"/><rect x="180" y="13" width="8" height="8" fill="#000800"/><rect x="188" y="13" width="15" height="8" fill="#001000"/><rect x="203" y="13" width="14" height="8" fill="#000800"/><rect x="217" y="13" width="8" height="8" fill="#001000"/><rect x="225" y="13" width="15" height="8" fill="#000c00"/><rect x="240" y="13" width="7" height="8" fill="#001000"/><rect x="247" y="13" width="15" height="8" fill="#000800"/><rect x="262" y="13" width="7" height="8" fill="#000c00"/><rect x="269" y="13" width="8" height="8" fill="#001000"/><rect x="277" y="13" width="7" height="8" fill="#000400"/><rect x="284" y="13" width="23" height="8" fill="#000800"/><rect x="307" y="13" width="14" height="8" fill="#000c00"/><rect x="321" y="13" width="8" height="8" fill="#001000"/><rect x="329" y="13" width="7" height="8" fill="#000c00"/><rect x="336" y="13" width="8" height="8" fill="#000800"/><rect x="344" y="13" width="22" height="8" fill="#000400"/><rect x="-5" y="21" width="14" height="7" fill="#000c00"/><rect x="9" y="21" width="15" height="7" fill="#000400"/><rect x="32" y="21" width="15" height="7" fill="#000800"/><rect x="47" y="21" width="7" height="7" fill="#000c00"/><rect x="54" y="21" width="7" height="7" fill="#000400"/><rect x="61" y="21" width="8" height="7" fill="#000c00"/><rect x="76" y="21" width="8" height="7" fill="#000400"/><rect x="84" y="21" width="7" height="7" fill="#000800"/><rect x="91" y="21" width="8" height="7" fill="#000400"/><rect x="99" y="21" width="22" height="7" fill="#000c00"/><rect x="121" y="21" width="15" height="7" fill="#001000"/><rect x="136" y="21" width="15" height="7" fill="#001900"/><rect x="151" y="21" width="14" height="7" fill="#001400"/><rect x="165" y="21" width="8" height="7" fill="#001900"/><rect x="173" y="21" width="7" height="7" fill="#001000"/><rect x="180" y="21" width="8" height="7" fill="#000800"/><rect x="188" y="21" width="15" height="7" fill="#001000"/><rect x="203" y="21" width="7" height="7" fill="#000c00"/><rect x="210" y="21" width="7" height="7" fill="#000800"/><rect x="217" y="21" width="15" height="7" fill="#000400"/><rect x="232" y="21" width="23" height="7" fill="#000800"/><rect x="255" y="21" width="7" height="7" fill="#000c00"/><rect x="262" y="21" width="15" height="7" fill="#001000"/><rect x="277" y="21" width="7" height="7" fill="#000800"/><rect x="284" y="21" width="8" height="7" fill="#000400"/><rect x="292" y="21" width="7" height="7" fill="#000800"/><rect x="307" y="21" width="22" height="7" fill="#000800"/><rect x="329" y="21" width="7" height="7" fill="#000c00"/><rect x="336" y="21" width="8" height="7" fill="#000800"/><rect x="351" y="21" width="15" height="7" fill="#000400"/><rect x="-5" y="28" width="22" height="7" fill="#000c00"/><rect x="17" y="28" width="15" height="7" fill="#000800"/><rect x="32" y="28" width="7" height="7" fill="#000c00"/><rect x="39" y="28" width="8" height="7" fill="#001000"/><rect x="47" y="28" width="14" height="7" fill="#000c00"/><rect x="61" y="28" width="8" height="7" fill="#001000"/><rect x="69" y="28" width="15" height="7" fill="#000800"/><rect x="84" y="28" width="7" height="7" fill="#000c00"/><rect x="99" y="28" width="7" height="7" fill="#000400"/><rect x="106" y="28" width="7" height="7" fill="#000800"/><rect x="113" y="28" width="8" height="7" fill="#000c00"/><rect x="121" y="28" width="15" height="7" fill="#001000"/><rect x="136" y="28" width="15" height="7" fill="#001900"/><rect x="151" y="28" width="7" height="7" fill="#001400"/><rect x="158" y="28" width="15" height="7" fill="#001900"/><rect x="173" y="28" width="7" height="7" fill="#001400"/><rect x="180" y="28" width="8" height="7" fill="#000c00"/><rect x="188" y="28" width="15" height="7" fill="#001400"/><rect x="203" y="28" width="7" height="7" fill="#001000"/><rect x="210" y="28" width="7" height="7" fill="#000c00"/><rect x="217" y="28" width="15" height="7" fill="#000400"/><rect x="232" y="28" width="23" height="7" fill="#000c00"/><rect x="255" y="28" width="7" height="7" fill="#000800"/><rect x="262" y="28" width="15" height="7" fill="#000c00"/><rect x="277" y="28" width="7" height="7" fill="#000800"/><rect x="284" y="28" width="23" height="7" fill="#000c00"/><rect x="307" y="28" width="7" height="7" fill="#000800"/><rect x="314" y="28" width="15" height="7" fill="#000400"/><rect x="329" y="28" width="22" height="7" fill="#000800"/><rect x="351" y="28" width="15" height="7" fill="#000400"/><rect x="-5" y="35" width="7" height="8" fill="#000c00"/><rect x="2" y="35" width="7" height="8" fill="#001000"/><rect x="9" y="35" width="38" height="8" fill="#000c00"/><rect x="47" y="35" width="7" height="8" fill="#001000"/><rect x="54" y="35" width="7" height="8" fill="#000c00"/><rect x="61" y="35" width="8" height="8" fill="#001400"/><rect x="69" y="35" width="7" height="8" fill="#000c00"/><rect x="76" y="35" width="8" height="8" fill="#001000"/><rect x="84" y="35" width="7" height="8" fill="#001400"/><rect x="91" y="35" width="8" height="8" fill="#000c00"/><rect x="99" y="35" width="7" height="8" fill="#001000"/><rect x="106" y="35" width="7" height="8" fill="#000c00"/><rect x="113" y="35" width="15" height="8" fill="#001000"/><rect x="128" y="35" width="8" height="8" fill="#000c00"/><rect x="136" y="35" width="7" height="8" fill="#001000"/><rect x="143" y="35" width="8" height="8" fill="#000c00"/><rect x="151" y="35" width="14" height="8" fill="#001400"/><rect x="165" y="35" width="8" height="8" fill="#001900"/><rect x="173" y="35" width="15" height="8" fill="#001000"/><rect x="188" y="35" width="15" height="8" fill="#001900"/><rect x="203" y="35" width="7" height="8" fill="#000c00"/><rect x="210" y="35" width="7" height="8" fill="#001000"/><rect x="217" y="35" width="15" height="8" fill="#000c00"/><rect x="232" y="35" width="15" height="8" fill="#001400"/><rect x="247" y="35" width="8" height="8" fill="#001000"/><rect x="255" y="35" width="22" height="8" fill="#000c00"/><rect x="277" y="35" width="7" height="8" fill="#001000"/><rect x="284" y="35" width="8" height="8" fill="#000800"/><rect x="292" y="35" width="15" height="8" fill="#000c00"/><rect x="307" y="35" width="29" height="8" fill="#000800"/><rect x="336" y="35" width="8" height="8" fill="#000c00"/><rect x="344" y="35" width="22" height="8" fill="#000800"/><rect x="-5" y="43" width="7" height="7" fill="#000400"/><rect x="2" y="43" width="7" height="7" fill="#000800"/><rect x="9" y="43" width="23" height="7" fill="#000c00"/><rect x="32" y="43" width="22" height="7" fill="#000800"/><rect x="54" y="43" width="15" height="7" fill="#001000"/><rect x="69" y="43" width="7" height="7" fill="#000c00"/><rect x="76" y="43" width="8" height="7" fill="#000800"/><rect x="84" y="43" width="22" height="7" fill="#001000"/><rect x="106" y="43" width="7" height="7" fill="#001900"/><rect x="113" y="43" width="15" height="7" fill="#001000"/><rect x="128" y="43" width="8" height="7" fill="#000800"/><rect x="136" y="43" width="7" height="7" fill="#000c00"/><rect x="143" y="43" width="8" height="7" fill="#001000"/><rect x="151" y="43" width="7" height="7" fill="#001400"/><rect x="158" y="43" width="15" height="7" fill="#001900"/><rect x="173" y="43" width="15" height="7" fill="#001400"/><rect x="188" y="43" width="7" height="7" fill="#001d00"/><rect x="195" y="43" width="8" height="7" fill="#001900"/><rect x="203" y="43" width="7" height="7" fill="#001000"/><rect x="210" y="43" width="7" height="7" fill="#001400"/><rect x="217" y="43" width="15" height="7" fill="#001000"/><rect x="232" y="43" width="8" height="7" fill="#001400"/><rect x="240" y="43" width="7" height="7" fill="#001d00"/><rect x="247" y="43" width="8" height="7" fill="#001900"/><rect x="255" y="43" width="14" height="7" fill="#001000"/><rect x="269" y="43" width="8" height="7" fill="#001400"/><rect x="277" y="43" width="7" height="7" fill="#001000"/><rect x="284" y="43" width="8" height="7" fill="#000400"/><rect x="292" y="43" width="7" height="7" fill="#000800"/><rect x="299" y="43" width="8" height="7" fill="#000c00"/><rect x="307" y="43" width="7" height="7" fill="#001000"/><rect x="314" y="43" width="15" height="7" fill="#000c00"/><rect x="329" y="43" width="7" height="7" fill="#000800"/><rect x="336" y="43" width="8" height="7" fill="#000c00"/><rect x="344" y="43" width="22" height="7" fill="#001000"/><rect x="-5" y="50" width="7" height="8" fill="#000800"/><rect x="2" y="50" width="7" height="8" fill="#000400"/><rect x="9" y="50" width="8" height="8" fill="#001000"/><rect x="17" y="50" width="15" height="8" fill="#000c00"/><rect x="32" y="50" width="15" height="8" fill="#000400"/><rect x="47" y="50" width="14" height="8" fill="#000800"/><rect x="61" y="50" width="8" height="8" fill="#001400"/><rect x="69" y="50" width="7" height="8" fill="#000c00"/><rect x="76" y="50" width="15" height="8" fill="#001000"/><rect x="91" y="50" width="15" height="8" fill="#001900"/><rect x="106" y="50" width="7" height="8" fill="#001d00"/><rect x="113" y="50" width="8" height="8" fill="#001400"/><rect x="121" y="50" width="7" height="8" fill="#001000"/><rect x="128" y="50" width="23" height="8" fill="#001400"/><rect x="151" y="50" width="7" height="8" fill="#001900"/><rect x="158" y="50" width="7" height="8" fill="#001d00"/><rect x="165" y="50" width="23" height="8" fill="#001900"/><rect x="188" y="50" width="15" height="8" fill="#001d00"/><rect x="203" y="50" width="7" height="8" fill="#001900"/><rect x="210" y="50" width="15" height="8" fill="#001000"/><rect x="225" y="50" width="7" height="8" fill="#001900"/><rect x="232" y="50" width="15" height="8" fill="#001d00"/><rect x="247" y="50" width="8" height="8" fill="#001900"/><rect x="255" y="50" width="7" height="8" fill="#001000"/><rect x="262" y="50" width="7" height="8" fill="#001400"/><rect x="269" y="50" width="8" height="8" fill="#000c00"/><rect x="277" y="50" width="7" height="8" fill="#000800"/><rect x="292" y="50" width="7" height="8" fill="#000400"/><rect x="307" y="50" width="7" height="8" fill="#000400"/><rect x="314" y="50" width="7" height="8" fill="#000800"/><rect x="321" y="50" width="8" height="8" fill="#000c00"/><rect x="329" y="50" width="7" height="8" fill="#000800"/><rect x="336" y="50" width="8" height="8" fill="#001000"/><rect x="344" y="50" width="7" height="8" fill="#000c00"/><rect x="351" y="50" width="15" height="8" fill="#001000"/><rect x="-5" y="58" width="14" height="7" fill="#000800"/><rect x="9" y="58" width="8" height="7" fill="#000c00"/><rect x="17" y="58" width="7" height="7" fill="#001400"/><rect x="24" y="58" width="15" height="7" fill="#000c00"/><rect x="39" y="58" width="22" height="7" fill="#000800"/><rect x="61" y="58" width="23" height="7" fill="#001000"/><rect x="84" y="58" width="7" height="7" fill="#001400"/><rect x="91" y="58" width="8" height="7" fill="#001d00"/><rect x="99" y="58" width="7" height="7" fill="#002500"/><rect x="106" y="58" width="7" height="7" fill="#001d00"/><rect x="113" y="58" width="15" height="7" fill="#001900"/><rect x="128" y="58" width="8" height="7" fill="#001400"/><rect x="136" y="58" width="15" height="7" fill="#001900"/><rect x="151" y="58" width="22" height="7" fill="#001d00"/><rect x="173" y="58" width="7" height="7" fill="#002100"/><rect x="180" y="58" width="8" height="7" fill="#001900"/><rect x="188" y="58" width="7" height="7" fill="#001400"/><rect x="195" y="58" width="8" height="7" fill="#002100"/><rect x="203" y="58" width="7" height="7" fill="#001900"/><rect x="210" y="58" width="7" height="7" fill="#001400"/><rect x="217" y="58" width="8" height="7" fill="#000c00"/><rect x="225" y="58" width="44" height="7" fill="#001900"/><rect x="269" y="58" width="8" height="7" fill="#001000"/><rect x="277" y="58" width="22" height="7" fill="#000c00"/><rect x="299" y="58" width="8" height="7" fill="#000400"/><rect x="307" y="58" width="22" height="7" fill="#000800"/><rect x="329" y="58" width="7" height="7" fill="#000400"/><rect x="336" y="58" width="8" height="7" fill="#000c00"/><rect x="344" y="58" width="15" height="7" fill="#000800"/><rect x="359" y="58" width="7" height="7" fill="#000c00"/><rect x="-5" y="65" width="14" height="8" fill="#000400"/><rect x="9" y="65" width="8" height="8" fill="#000800"/><rect x="17" y="65" width="7" height="8" fill="#000c00"/><rect x="24" y="65" width="8" height="8" fill="#001000"/><rect x="32" y="65" width="22" height="8" fill="#000c00"/><rect x="54" y="65" width="7" height="8" fill="#000800"/><rect x="61" y="65" width="8" height="8" fill="#001000"/><rect x="69" y="65" width="7" height="8" fill="#000c00"/><rect x="76" y="65" width="15" height="8" fill="#001000"/><rect x="91" y="65" width="8" height="8" fill="#001d00"/><rect x="99" y="65" width="7" height="8" fill="#002100"/><rect x="106" y="65" width="30" height="8" fill="#001d00"/><rect x="136" y="65" width="15" height="8" fill="#002500"/><rect x="151" y="65" width="7" height="8" fill="#002900"/><rect x="158" y="65" width="7" height="8" fill="#002500"/><rect x="165" y="65" width="15" height="8" fill="#002900"/><rect x="180" y="65" width="15" height="8" fill="#001d00"/><rect x="195" y="65" width="15" height="8" fill="#002500"/><rect x="210" y="65" width="15" height="8" fill="#001400"/><rect x="225" y="65" width="7" height="8" fill="#001900"/><rect x="232" y="65" width="8" height="8" fill="#002100"/><rect x="240" y="65" width="15" height="8" fill="#001d00"/><rect x="255" y="65" width="7" height="8" fill="#001400"/><rect x="262" y="65" width="7" height="8" fill="#001900"/><rect x="269" y="65" width="8" height="8" fill="#001000"/><rect x="277" y="65" width="7" height="8" fill="#000c00"/><rect x="284" y="65" width="8" height="8" fill="#000800"/><rect x="292" y="65" width="7" height="8" fill="#000c00"/><rect x="299" y="65" width="15" height="8" fill="#000800"/><rect x="314" y="65" width="7" height="8" fill="#000400"/><rect x="321" y="65" width="15" height="8" fill="#000c00"/><rect x="336" y="65" width="8" height="8" fill="#001000"/><rect x="344" y="65" width="22" height="8" fill="#000800"/><rect x="-5" y="73" width="7" height="7" fill="#000400"/><rect x="2" y="73" width="7" height="7" fill="#000800"/><rect x="9" y="73" width="8" height="7" fill="#000400"/><rect x="17" y="73" width="7" height="7" fill="#000800"/><rect x="24" y="73" width="8" height="7" fill="#000400"/><rect x="32" y="73" width="7" height="7" fill="#000c00"/><rect x="39" y="73" width="8" height="7" fill="#001000"/><rect x="47" y="73" width="7" height="7" fill="#001400"/><rect x="54" y="73" width="7" height="7" fill="#000c00"/><rect x="61" y="73" width="15" height="7" fill="#001000"/><rect x="76" y="73" width="8" height="7" fill="#001900"/><rect x="84" y="73" width="7" height="7" fill="#001d00"/><rect x="91" y="73" width="8" height="7" fill="#001900"/><rect x="99" y="73" width="7" height="7" fill="#001d00"/><rect x="106" y="73" width="7" height="7" fill="#001900"/><rect x="113" y="73" width="8" height="7" fill="#002100"/><rect x="121" y="73" width="7" height="7" fill="#001d00"/><rect x="128" y="73" width="15" height="7" fill="#002100"/><rect x="143" y="73" width="8" height="7" fill="#002900"/><rect x="151" y="73" width="14" height="7" fill="#002500"/><rect x="165" y="73" width="15" height="7" fill="#002d00"/><rect x="180" y="73" width="8" height="7" fill="#002100"/><rect x="188" y="73" width="7" height="7" fill="#002900"/><rect x="195" y="73" width="8" height="7" fill="#003100"/><rect x="203" y="73" width="7" height="7" fill="#002900"/><rect x="210" y="73" width="7" height="7" fill="#002500"/><rect x="217" y="73" width="8" height="7" fill="#002100"/><rect x="225" y="73" width="7" height="7" fill="#002500"/><rect x="232" y="73" width="8" height="7" fill="#002900"/><rect x="240" y="73" width="15" height="7" fill="#002100"/><rect x="255" y="73" width="14" height="7" fill="#001900"/><rect x="269" y="73" width="8" height="7" fill="#001000"/><rect x="277" y="73" width="7" height="7" fill="#000c00"/><rect x="284" y="73" width="8" height="7" fill="#001000"/><rect x="292" y="73" width="7" height="7" fill="#000c00"/><rect x="299" y="73" width="8" height="7" fill="#001000"/><rect x="307" y="73" width="14" height="7" fill="#000c00"/><rect x="321" y="73" width="8" height="7" fill="#001000"/><rect x="329" y="73" width="15" height="7" fill="#001400"/><rect x="344" y="73" width="7" height="7" fill="#000400"/><rect x="351" y="73" width="8" height="7" fill="#000800"/><rect x="359" y="73" width="7" height="7" fill="#000c00"/><rect x="-5" y="80" width="7" height="8" fill="#000400"/><rect x="2" y="80" width="7" height="8" fill="#000c00"/><rect x="9" y="80" width="8" height="8" fill="#001000"/><rect x="17" y="80" width="7" height="8" fill="#000c00"/><rect x="24" y="80" width="15" height="8" fill="#000400"/><rect x="39" y="80" width="8" height="8" fill="#000c00"/><rect x="47" y="80" width="7" height="8" fill="#001400"/><rect x="54" y="80" width="15" height="8" fill="#001000"/><rect x="69" y="80" width="7" height="8" fill="#001400"/><rect x="76" y="80" width="15" height="8" fill="#002100"/><rect x="91" y="80" width="22" height="8" fill="#001900"/><rect x="113" y="80" width="8" height="8" fill="#001d00"/><rect x="121" y="80" width="7" height="8" fill="#002100"/><rect x="128" y="80" width="8" height="8" fill="#002500"/><rect x="136" y="80" width="7" height="8" fill="#002900"/><rect x="143" y="80" width="8" height="8" fill="#002d00"/><rect x="151" y="80" width="14" height="8" fill="#002900"/><rect x="165" y="80" width="8" height="8" fill="#003900"/><rect x="173" y="80" width="7" height="8" fill="#003d00"/><rect x="180" y="80" width="15" height="8" fill="#003500"/><rect x="195" y="80" width="22" height="8" fill="#002900"/><rect x="217" y="80" width="8" height="8" fill="#003100"/><rect x="225" y="80" width="15" height="8" fill="#002900"/><rect x="240" y="80" width="7" height="8" fill="#002100"/><rect x="247" y="80" width="8" height="8" fill="#002500"/><rect x="255" y="80" width="7" height="8" fill="#001d00"/><rect x="262" y="80" width="7" height="8" fill="#001900"/><rect x="269" y="80" width="15" height="8" fill="#001400"/><rect x="284" y="80" width="23" height="8" fill="#000c00"/><rect x="307" y="80" width="14" height="8" fill="#001000"/><rect x="321" y="80" width="15" height="8" fill="#001400"/><rect x="336" y="80" width="8" height="8" fill="#001000"/><rect x="344" y="80" width="15" height="8" fill="#000800"/><rect x="359" y="80" width="7" height="8" fill="#000c00"/><rect x="-5" y="88" width="7" height="7" fill="#000800"/><rect x="2" y="88" width="7" height="7" fill="#000c00"/><rect x="9" y="88" width="8" height="7" fill="#001000"/><rect x="17" y="88" width="7" height="7" fill="#001400"/><rect x="24" y="88" width="8" height="7" fill="#000800"/><rect x="32" y="88" width="15" height="7" fill="#000c00"/><rect x="47" y="88" width="7" height="7" fill="#001400"/><rect x="54" y="88" width="22" height="7" fill="#001000"/><rect x="76" y="88" width="8" height="7" fill="#001900"/><rect x="84" y="88" width="15" height="7" fill="#001d00"/><rect x="99" y="88" width="7" height="7" fill="#002500"/><rect x="106" y="88" width="7" height="7" fill="#002900"/><rect x="113" y="88" width="15" height="7" fill="#002d00"/><rect x="128" y="88" width="8" height="7" fill="#003900"/><rect x="136" y="88" width="7" height="7" fill="#003500"/><rect x="143" y="88" width="8" height="7" fill="#003d00"/><rect x="151" y="88" width="7" height="7" fill="#003100"/><rect x="158" y="88" width="7" height="7" fill="#002d00"/><rect x="165" y="88" width="8" height="7" fill="#003d00"/><rect x="173" y="88" width="15" height="7" fill="#004a00"/><rect x="188" y="88" width="7" height="7" fill="#004100"/><rect x="195" y="88" width="8" height="7" fill="#003500"/><rect x="203" y="88" width="7" height="7" fill="#002d00"/><rect x="210" y="88" width="7" height="7" fill="#003100"/><rect x="217" y="88" width="8" height="7" fill="#003500"/><rect x="225" y="88" width="7" height="7" fill="#003100"/><rect x="232" y="88" width="8" height="7" fill="#002500"/><rect x="240" y="88" width="7" height="7" fill="#001d00"/><rect x="247" y="88" width="8" height="7" fill="#002100"/><rect x="255" y="88" width="22" height="7" fill="#001d00"/><rect x="277" y="88" width="7" height="7" fill="#001900"/><rect x="284" y="88" width="8" height="7" fill="#001000"/><rect x="292" y="88" width="7" height="7" fill="#000c00"/><rect x="299" y="88" width="8" height="7" fill="#001400"/><rect x="307" y="88" width="7" height="7" fill="#001900"/><rect x="314" y="88" width="7" height="7" fill="#001400"/><rect x="321" y="88" width="8" height="7" fill="#001000"/><rect x="329" y="88" width="7" height="7" fill="#000c00"/><rect x="336" y="88" width="8" height="7" fill="#001000"/><rect x="344" y="88" width="15" height="7" fill="#000c00"/><rect x="359" y="88" width="7" height="7" fill="#000800"/><rect x="-5" y="95" width="7" height="7" fill="#000c00"/><rect x="2" y="95" width="15" height="7" fill="#001000"/><rect x="17" y="95" width="7" height="7" fill="#001900"/><rect x="24" y="95" width="8" height="7" fill="#001400"/><rect x="32" y="95" width="7" height="7" fill="#001900"/><rect x="39" y="95" width="30" height="7" fill="#001400"/><rect x="69" y="95" width="7" height="7" fill="#001900"/><rect x="76" y="95" width="23" height="7" fill="#001d00"/><rect x="99" y="95" width="7" height="7" fill="#002100"/><rect x="106" y="95" width="7" height="7" fill="#002900"/><rect x="113" y="95" width="8" height="7" fill="#003100"/><rect x="121" y="95" width="7" height="7" fill="#003500"/><rect x="128" y="95" width="8" height="7" fill="#003900"/><rect x="136" y="95" width="7" height="7" fill="#004100"/><rect x="143" y="95" width="8" height="7" fill="#004a00"/><rect x="151" y="95" width="7" height="7" fill="#003d00"/><rect x="158" y="95" width="7" height="7" fill="#004100"/><rect x="165" y="95" width="8" height="7" fill="#004500"/><rect x="173" y="95" width="7" height="7" fill="#004e00"/><rect x="180" y="95" width="15" height="7" fill="#004a00"/><rect x="195" y="95" width="8" height="7" fill="#003d00"/><rect x="203" y="95" width="7" height="7" fill="#004100"/><rect x="210" y="95" width="7" height="7" fill="#003900"/><rect x="217" y="95" width="8" height="7" fill="#004100"/><rect x="225" y="95" width="7" height="7" fill="#003900"/><rect x="232" y="95" width="8" height="7" fill="#002d00"/><rect x="240" y="95" width="7" height="7" fill="#002100"/><rect x="247" y="95" width="22" height="7" fill="#002900"/><rect x="269" y="95" width="8" height="7" fill="#002500"/><rect x="277" y="95" width="7" height="7" fill="#002100"/><rect x="284" y="95" width="8" height="7" fill="#001400"/><rect x="292" y="95" width="15" height="7" fill="#001900"/><rect x="307" y="95" width="7" height="7" fill="#001400"/><rect x="314" y="95" width="7" height="7" fill="#001000"/><rect x="321" y="95" width="15" height="7" fill="#000800"/><rect x="336" y="95" width="8" height="7" fill="#001000"/><rect x="344" y="95" width="22" height="7" fill="#000c00"/><rect x="9" y="102" width="8" height="8" fill="#000400"/><rect x="17" y="102" width="7" height="8" fill="#000800"/><rect x="24" y="102" width="8" height="8" fill="#000c00"/><rect x="32" y="102" width="7" height="8" fill="#001400"/><rect x="39" y="102" width="8" height="8" fill="#001000"/><rect x="47" y="102" width="14" height="8" fill="#001400"/><rect x="61" y="102" width="8" height="8" fill="#001900"/><rect x="69" y="102" width="7" height="8" fill="#001d00"/><rect x="76" y="102" width="8" height="8" fill="#002500"/><rect x="84" y="102" width="7" height="8" fill="#002100"/><rect x="91" y="102" width="8" height="8" fill="#002900"/><rect x="99" y="102" width="7" height="8" fill="#002d00"/><rect x="106" y="102" width="7" height="8" fill="#003500"/><rect x="113" y="102" width="15" height="8" fill="#003900"/><rect x="128" y="102" width="8" height="8" fill="#003d00"/><rect x="136" y="102" width="7" height="8" fill="#004500"/><rect x="143" y="102" width="22" height="8" fill="#005200"/><rect x="165" y="102" width="8" height="8" fill="#005600"/><rect x="173" y="102" width="7" height="8" fill="#005e00"/><rect x="180" y="102" width="15" height="8" fill="#005a00"/><rect x="195" y="102" width="8" height="8" fill="#005600"/><rect x="203" y="102" width="7" height="8" fill="#005200"/><rect x="210" y="102" width="15" height="8" fill="#004e00"/><rect x="225" y="102" width="7" height="8" fill="#004a00"/><rect x="232" y="102" width="8" height="8" fill="#003500"/><rect x="240" y="102" width="7" height="8" fill="#002d00"/><rect x="247" y="102" width="15" height="8" fill="#003100"/><rect x="262" y="102" width="15" height="8" fill="#002900"/><rect x="277" y="102" width="7" height="8" fill="#002100"/><rect x="284" y="102" width="8" height="8" fill="#001900"/><rect x="292" y="102" width="22" height="8" fill="#001400"/><rect x="314" y="102" width="15" height="8" fill="#001000"/><rect x="329" y="102" width="7" height="8" fill="#000c00"/><rect x="336" y="102" width="15" height="8" fill="#001000"/><rect x="351" y="102" width="8" height="8" fill="#000800"/><rect x="359" y="102" width="7" height="8" fill="#001000"/><rect x="2" y="110" width="7" height="7" fill="#000800"/><rect x="9" y="110" width="8" height="7" fill="#000400"/><rect x="17" y="110" width="7" height="7" fill="#000c00"/><rect x="24" y="110" width="8" height="7" fill="#000800"/><rect x="32" y="110" width="7" height="7" fill="#001000"/><rect x="39" y="110" width="8" height="7" fill="#001400"/><rect x="47" y="110" width="14" height="7" fill="#001900"/><rect x="61" y="110" width="8" height="7" fill="#002100"/><rect x="69" y="110" width="22" height="7" fill="#002500"/><rect x="91" y="110" width="8" height="7" fill="#002d00"/><rect x="99" y="110" width="7" height="7" fill="#003500"/><rect x="106" y="110" width="7" height="7" fill="#003900"/><rect x="113" y="110" width="8" height="7" fill="#004500"/><rect x="121" y="110" width="15" height="7" fill="#004a00"/><rect x="136" y="110" width="7" height="7" fill="#005a00"/><rect x="143" y="110" width="8" height="7" fill="#006200"/><rect x="151" y="110" width="7" height="7" fill="#006e00"/><rect x="158" y="110" width="15" height="7" fill="#007600"/><rect x="173" y="110" width="7" height="7" fill="#007f00"/><rect x="180" y="110" width="15" height="7" fill="#007600"/><rect x="195" y="110" width="15" height="7" fill="#006e00"/><rect x="210" y="110" width="7" height="7" fill="#006600"/><rect x="217" y="110" width="8" height="7" fill="#006200"/><rect x="225" y="110" width="7" height="7" fill="#005600"/><rect x="232" y="110" width="8" height="7" fill="#004a00"/><rect x="240" y="110" width="7" height="7" fill="#003d00"/><rect x="247" y="110" width="8" height="7" fill="#003900"/><rect x="255" y="110" width="7" height="7" fill="#002d00"/><rect x="262" y="110" width="15" height="7" fill="#002900"/><rect x="277" y="110" width="7" height="7" fill="#002500"/><rect x="284" y="110" width="23" height="7" fill="#001400"/><rect x="307" y="110" width="29" height="7" fill="#001000"/><rect x="336" y="110" width="8" height="7" fill="#000c00"/><rect x="344" y="110" width="7" height="7" fill="#000800"/><rect x="351" y="110" width="8" height="7" fill="#000c00"/><rect x="359" y="110" width="7" height="7" fill="#000800"/><rect x="-5" y="117" width="7" height="8" fill="#000800"/><rect x="2" y="117" width="22" height="8" fill="#000c00"/><rect x="24" y="117" width="8" height="8" fill="#000400"/><rect x="32" y="117" width="7" height="8" fill="#000800"/><rect x="39" y="117" width="8" height="8" fill="#001400"/><rect x="47" y="117" width="7" height="8" fill="#001900"/><rect x="54" y="117" width="7" height="8" fill="#002100"/><rect x="61" y="117" width="15" height="8" fill="#002500"/><rect x="76" y="117" width="15" height="8" fill="#002900"/><rect x="91" y="117" width="8" height="8" fill="#003100"/><rect x="99" y="117" width="7" height="8" fill="#003500"/><rect x="106" y="117" width="7" height="8" fill="#004100"/><rect x="113" y="117" width="8" height="8" fill="#004e00"/><rect x="121" y="117" width="7" height="8" fill="#005a00"/><rect x="128" y="117" width="8" height="8" fill="#006200"/><rect x="136" y="117" width="7" height="8" fill="#007200"/><rect x="143" y="117" width="8" height="8" fill="#008300"/><rect x="151" y="117" width="7" height="8" fill="#009300"/><rect x="158" y="117" width="7" height="8" fill="#009f00"/><rect x="165" y="117" width="8" height="8" fill="#00a300"/><rect x="173" y="117" width="7" height="8" fill="#00ac00"/><rect x="180" y="117" width="8" height="8" fill="#00a700"/><rect x="188" y="117" width="7" height="8" fill="#009f00"/><rect x="195" y="117" width="8" height="8" fill="#009700"/><rect x="203" y="117" width="7" height="8" fill="#009300"/><rect x="210" y="117" width="7" height="8" fill="#008700"/><rect x="217" y="117" width="8" height="8" fill="#007600"/><rect x="225" y="117" width="7" height="8" fill="#005e00"/><rect x="232" y="117" width="8" height="8" fill="#005a00"/><rect x="240" y="117" width="7" height="8" fill="#005200"/><rect x="247" y="117" width="8" height="8" fill="#004a00"/><rect x="255" y="117" width="7" height="8" fill="#003500"/><rect x="262" y="117" width="7" height="8" fill="#002900"/><rect x="269" y="117" width="8" height="8" fill="#003100"/><rect x="277" y="117" width="7" height="8" fill="#002900"/><rect x="284" y="117" width="15" height="8" fill="#002100"/><rect x="299" y="117" width="8" height="8" fill="#001900"/><rect x="307" y="117" width="7" height="8" fill="#001000"/><rect x="314" y="117" width="15" height="8" fill="#000c00"/><rect x="329" y="117" width="7" height="8" fill="#001000"/><rect x="336" y="117" width="15" height="8" fill="#000c00"/><rect x="351" y="117" width="8" height="8" fill="#000800"/><rect x="359" y="117" width="7" height="8" fill="#000c00"/><rect x="-5" y="125" width="7" height="7" fill="#001000"/><rect x="2" y="125" width="7" height="7" fill="#001400"/><rect x="9" y="125" width="15" height="7" fill="#000c00"/><rect x="24" y="125" width="8" height="7" fill="#000800"/><rect x="32" y="125" width="7" height="7" fill="#000c00"/><rect x="39" y="125" width="22" height="7" fill="#001900"/><rect x="61" y="125" width="15" height="7" fill="#002100"/><rect x="76" y="125" width="8" height="7" fill="#002900"/><rect x="84" y="125" width="7" height="7" fill="#002d00"/><rect x="91" y="125" width="8" height="7" fill="#003900"/><rect x="99" y="125" width="7" height="7" fill="#003d00"/><rect x="106" y="125" width="7" height="7" fill="#004a00"/><rect x="113" y="125" width="8" height="7" fill="#005a00"/><rect x="121" y="125" width="7" height="7" fill="#006a00"/><rect x="128" y="125" width="8" height="7" fill="#008300"/><rect x="136" y="125" width="7" height="7" fill="#009b00"/><rect x="143" y="125" width="8" height="7" fill="#00b800"/><rect x="151" y="125" width="7" height="7" fill="#00cc0d"/><rect x="158" y="125" width="7" height="7" fill="#00d418"/><rect x="165" y="125" width="8" height="7" fill="#00e028"/><rect x="173" y="125" width="7" height="7" fill="#00e52d"/><rect x="180" y="125" width="8" height="7" fill="#00ed38"/><rect x="188" y="125" width="7" height="7" fill="#00e028"/><rect x="195" y="125" width="8" height="7" fill="#00d81d"/><rect x="203" y="125" width="7" height="7" fill="#00c808"/><rect x="210" y="125" width="7" height="7" fill="#00b400"/><rect x="217" y="125" width="8" height="7" fill="#009700"/><rect x="225" y="125" width="7" height="7" fill="#007f00"/><rect x="232" y="125" width="8" height="7" fill="#007600"/><rect x="240" y="125" width="7" height="7" fill="#005e00"/><rect x="247" y="125" width="8" height="7" fill="#005a00"/><rect x="255" y="125" width="7" height="7" fill="#004100"/><rect x="262" y="125" width="15" height="7" fill="#003500"/><rect x="277" y="125" width="7" height="7" fill="#003100"/><rect x="284" y="125" width="8" height="7" fill="#002500"/><rect x="292" y="125" width="7" height="7" fill="#002100"/><rect x="299" y="125" width="8" height="7" fill="#001400"/><rect x="307" y="125" width="14" height="7" fill="#001000"/><rect x="321" y="125" width="45" height="7" fill="#000c00"/><rect x="-5" y="132" width="7" height="8" fill="#000c00"/><rect x="2" y="132" width="7" height="8" fill="#001000"/><rect x="9" y="132" width="8" height="8" fill="#000800"/><rect x="17" y="132" width="15" height="8" fill="#000c00"/><rect x="32" y="132" width="22" height="8" fill="#001900"/><rect x="54" y="132" width="7" height="8" fill="#001d00"/><rect x="61" y="132" width="15" height="8" fill="#002100"/><rect x="76" y="132" width="8" height="8" fill="#002d00"/><rect x="84" y="132" width="7" height="8" fill="#003100"/><rect x="91" y="132" width="8" height="8" fill="#003d00"/><rect x="99" y="132" width="7" height="8" fill="#004500"/><rect x="106" y="132" width="7" height="8" fill="#005600"/><rect x="113" y="132" width="8" height="8" fill="#007200"/><rect x="121" y="132" width="7" height="8" fill="#008b00"/><rect x="128" y="132" width="8" height="8" fill="#00ac00"/><rect x="136" y="132" width="7" height="8" fill="#00c808"/><rect x="143" y="132" width="8" height="8" fill="#00f13d"/><rect x="151" y="132" width="7" height="8" fill="#0af557"/><rect x="158" y="132" width="7" height="8" fill="#1be462"/><rect x="165" y="132" width="8" height="8" fill="#27d86b"/><rect x="173" y="132" width="15" height="8" fill="#2fd070"/><rect x="188" y="132" width="7" height="8" fill="#27d86b"/><rect x="195" y="132" width="8" height="8" fill="#1be462"/><rect x="203" y="132" width="7" height="8" fill="#06f954"/><rect x="210" y="132" width="7" height="8" fill="#00e52d"/><rect x="217" y="132" width="8" height="8" fill="#00c403"/><rect x="225" y="132" width="7" height="8" fill="#00a300"/><rect x="232" y="132" width="8" height="8" fill="#008700"/><rect x="240" y="132" width="7" height="8" fill="#006600"/><rect x="247" y="132" width="8" height="8" fill="#006200"/><rect x="255" y="132" width="7" height="8" fill="#004a00"/><rect x="262" y="132" width="7" height="8" fill="#003900"/><rect x="269" y="132" width="8" height="8" fill="#003500"/><rect x="277" y="132" width="7" height="8" fill="#002d00"/><rect x="284" y="132" width="8" height="8" fill="#002100"/><rect x="292" y="132" width="7" height="8" fill="#001d00"/><rect x="299" y="132" width="22" height="8" fill="#001400"/><rect x="321" y="132" width="8" height="8" fill="#000c00"/><rect x="329" y="132" width="15" height="8" fill="#001000"/><rect x="344" y="132" width="7" height="8" fill="#000c00"/><rect x="351" y="132" width="8" height="8" fill="#000800"/><rect x="359" y="132" width="7" height="8" fill="#000c00"/><rect x="-5" y="140" width="7" height="7" fill="#000400"/><rect x="2" y="140" width="7" height="7" fill="#000c00"/><rect x="9" y="140" width="15" height="7" fill="#001000"/><rect x="24" y="140" width="8" height="7" fill="#001400"/><rect x="32" y="140" width="29" height="7" fill="#001900"/><rect x="61" y="140" width="8" height="7" fill="#002500"/><rect x="69" y="140" width="7" height="7" fill="#002d00"/><rect x="76" y="140" width="8" height="7" fill="#002900"/><rect x="84" y="140" width="7" height="7" fill="#003100"/><rect x="91" y="140" width="8" height="7" fill="#004500"/><rect x="99" y="140" width="7" height="7" fill="#004e00"/><rect x="106" y="140" width="7" height="7" fill="#006600"/><rect x="113" y="140" width="8" height="7" fill="#008300"/><rect x="121" y="140" width="7" height="7" fill="#00a700"/><rect x="128" y="140" width="8" height="7" fill="#00c808"/><rect x="136" y="140" width="7" height="7" fill="#00e933"/><rect x="143" y="140" width="8" height="7" fill="#23dc68"/><rect x="151" y="140" width="7" height="7" fill="#47b881"/><rect x="158" y="140" width="7" height="7" fill="#689797"/><rect x="165" y="140" width="8" height="7" fill="#817ea8"/><rect x="173" y="140" width="15" height="7" fill="#8d72b1"/><rect x="188" y="140" width="7" height="7" fill="#817ea8"/><rect x="195" y="140" width="8" height="7" fill="#689797"/><rect x="203" y="140" width="7" height="7" fill="#47b881"/><rect x="210" y="140" width="7" height="7" fill="#23dc68"/><rect x="217" y="140" width="8" height="7" fill="#00f543"/><rect x="225" y="140" width="7" height="7" fill="#00d013"/><rect x="232" y="140" width="8" height="7" fill="#00a700"/><rect x="240" y="140" width="7" height="7" fill="#007f00"/><rect x="247" y="140" width="8" height="7" fill="#007200"/><rect x="255" y="140" width="7" height="7" fill="#005600"/><rect x="262" y="140" width="7" height="7" fill="#004500"/><rect x="269" y="140" width="8" height="7" fill="#003900"/><rect x="277" y="140" width="7" height="7" fill="#003100"/><rect x="284" y="140" width="8" height="7" fill="#002100"/><rect x="292" y="140" width="7" height="7" fill="#001900"/><rect x="299" y="140" width="8" height="7" fill="#001400"/><rect x="307" y="140" width="14" height="7" fill="#001900"/><rect x="321" y="140" width="15" height="7" fill="#001000"/><rect x="336" y="140" width="8" height="7" fill="#001400"/><rect x="344" y="140" width="22" height="7" fill="#001000"/><rect x="2" y="147" width="7" height="7" fill="#000c00"/><rect x="9" y="147" width="15" height="7" fill="#001000"/><rect x="24" y="147" width="8" height="7" fill="#000c00"/><rect x="32" y="147" width="7" height="7" fill="#001900"/><rect x="39" y="147" width="15" height="7" fill="#001000"/><rect x="54" y="147" width="7" height="7" fill="#001400"/><rect x="61" y="147" width="8" height="7" fill="#002100"/><rect x="69" y="147" width="7" height="7" fill="#003100"/><rect x="76" y="147" width="8" height="7" fill="#002d00"/><rect x="84" y="147" width="7" height="7" fill="#003100"/><rect x="91" y="147" width="8" height="7" fill="#004500"/><rect x="99" y="147" width="7" height="7" fill="#005600"/><rect x="106" y="147" width="7" height="7" fill="#006e00"/><rect x="113" y="147" width="8" height="7" fill="#009300"/><rect x="121" y="147" width="7" height="7" fill="#00c403"/><rect x="128" y="147" width="8" height="7" fill="#00f13d"/><rect x="136" y="147" width="7" height="7" fill="#2bd46d"/><rect x="143" y="147" width="8" height="7" fill="#649b95"/><rect x="151" y="147" width="7" height="7" fill="#9966b9"/><rect x="158" y="147" width="7" height="7" fill="#c639d8"/><rect x="165" y="147" width="8" height="7" fill="#e718ee"/><rect x="173" y="147" width="15" height="7" fill="#f708f9"/><rect x="188" y="147" width="7" height="7" fill="#e718ee"/><rect x="195" y="147" width="8" height="7" fill="#c639d8"/><rect x="203" y="147" width="7" height="7" fill="#9966b9"/><rect x="210" y="147" width="7" height="7" fill="#649b95"/><rect x="217" y="147" width="8" height="7" fill="#2bd46d"/><rect x="225" y="147" width="7" height="7" fill="#00f543"/><rect x="232" y="147" width="8" height="7" fill="#00c000"/><rect x="240" y="147" width="7" height="7" fill="#009300"/><rect x="247" y="147" width="8" height="7" fill="#007600"/><rect x="255" y="147" width="7" height="7" fill="#005a00"/><rect x="262" y="147" width="7" height="7" fill="#004100"/><rect x="269" y="147" width="8" height="7" fill="#003500"/><rect x="277" y="147" width="7" height="7" fill="#002d00"/><rect x="284" y="147" width="8" height="7" fill="#002900"/><rect x="292" y="147" width="7" height="7" fill="#002100"/><rect x="299" y="147" width="8" height="7" fill="#001900"/><rect x="307" y="147" width="14" height="7" fill="#002100"/><rect x="321" y="147" width="8" height="7" fill="#001900"/><rect x="329" y="147" width="7" height="7" fill="#001000"/><rect x="336" y="147" width="15" height="7" fill="#000800"/><rect x="351" y="147" width="15" height="7" fill="#001000"/><rect x="-5" y="154" width="7" height="8" fill="#000800"/><rect x="2" y="154" width="15" height="8" fill="#000c00"/><rect x="24" y="154" width="8" height="8" fill="#000800"/><rect x="32" y="154" width="7" height="8" fill="#000c00"/><rect x="39" y="154" width="8" height="8" fill="#001000"/><rect x="47" y="154" width="7" height="8" fill="#001400"/><rect x="54" y="154" width="7" height="8" fill="#001900"/><rect x="61" y="154" width="8" height="8" fill="#002500"/><rect x="69" y="154" width="7" height="8" fill="#002d00"/><rect x="76" y="154" width="8" height="8" fill="#003100"/><rect x="84" y="154" width="7" height="8" fill="#003900"/><rect x="91" y="154" width="8" height="8" fill="#005200"/><rect x="99" y="154" width="7" height="8" fill="#006200"/><rect x="106" y="154" width="7" height="8" fill="#008300"/><rect x="113" y="154" width="8" height="8" fill="#00ac00"/><rect x="121" y="154" width="7" height="8" fill="#00e028"/><rect x="128" y="154" width="8" height="8" fill="#23dc68"/><rect x="136" y="154" width="7" height="8" fill="#649b95"/><rect x="143" y="154" width="8" height="8" fill="#a956c4"/><rect x="151" y="154" width="7" height="8" fill="#ef10f4"/><rect x="158" y="154" width="7" height="8" fill="#ff00d6"/><rect x="165" y="154" width="8" height="8" fill="#ff00ad"/><rect x="173" y="154" width="15" height="8" fill="#ff0095"/><rect x="188" y="154" width="7" height="8" fill="#ff00ad"/><rect x="195" y="154" width="8" height="8" fill="#ff00d6"/><rect x="203" y="154" width="7" height="8" fill="#ef10f4"/><rect x="210" y="154" width="7" height="8" fill="#a956c4"/><rect x="217" y="154" width="8" height="8" fill="#649b95"/><rect x="225" y="154" width="7" height="8" fill="#23dc68"/><rect x="232" y="154" width="8" height="8" fill="#00dc23"/><rect x="240" y="154" width="7" height="8" fill="#00a700"/><rect x="247" y="154" width="8" height="8" fill="#008300"/><rect x="255" y="154" width="7" height="8" fill="#006200"/><rect x="262" y="154" width="7" height="8" fill="#005200"/><rect x="269" y="154" width="8" height="8" fill="#003d00"/><rect x="277" y="154" width="15" height="8" fill="#002d00"/><rect x="292" y="154" width="7" height="8" fill="#002900"/><rect x="299" y="154" width="8" height="8" fill="#002100"/><rect x="307" y="154" width="7" height="8" fill="#002500"/><rect x="314" y="154" width="7" height="8" fill="#001d00"/><rect x="321" y="154" width="8" height="8" fill="#001400"/><rect x="329" y="154" width="7" height="8" fill="#000c00"/><rect x="336" y="154" width="8" height="8" fill="#000400"/><rect x="344" y="154" width="7" height="8" fill="#000800"/><rect x="351" y="154" width="8" height="8" fill="#000c00"/><rect x="359" y="154" width="7" height="8" fill="#001000"/><rect x="-5" y="162" width="7" height="7" fill="#000800"/><rect x="2" y="162" width="7" height="7" fill="#000c00"/><rect x="9" y="162" width="8" height="7" fill="#001000"/><rect x="17" y="162" width="7" height="7" fill="#000800"/><rect x="24" y="162" width="8" height="7" fill="#000c00"/><rect x="32" y="162" width="7" height="7" fill="#001400"/><rect x="39" y="162" width="8" height="7" fill="#001000"/><rect x="47" y="162" width="7" height="7" fill="#001900"/><rect x="54" y="162" width="7" height="7" fill="#001d00"/><rect x="61" y="162" width="8" height="7" fill="#002900"/><rect x="69" y="162" width="7" height="7" fill="#003100"/><rect x="76" y="162" width="8" height="7" fill="#003900"/><rect x="84" y="162" width="7" height="7" fill="#004500"/><rect x="91" y="162" width="8" height="7" fill="#005200"/><rect x="99" y="162" width="7" height="7" fill="#006600"/><rect x="106" y="162" width="7" height="7" fill="#008f00"/><rect x="113" y="162" width="8" height="7" fill="#00c000"/><rect x="121" y="162" width="7" height="7" fill="#00fd4d"/><rect x="128" y="162" width="8" height="7" fill="#47b881"/><rect x="136" y="162" width="7" height="7" fill="#9966b9"/><rect x="143" y="162" width="8" height="7" fill="#ef10f4"/><rect x="151" y="162" width="7" height="7" fill="#ff00be"/><rect x="158" y="162" width="7" height="7" fill="#ff0078"/><rect x="165" y="162" width="8" height="7" fill="#ff004b"/><rect x="173" y="162" width="15" height="7" fill="#ff0033"/><rect x="188" y="162" width="7" height="7" fill="#ff004b"/><rect x="195" y="162" width="8" height="7" fill="#ff0078"/><rect x="203" y="162" width="7" height="7" fill="#ff00be"/><rect x="210" y="162" width="7" height="7" fill="#ef10f4"/><rect x="217" y="162" width="8" height="7" fill="#9966b9"/><rect x="225" y="162" width="7" height="7" fill="#47b881"/><rect x="232" y="162" width="8" height="7" fill="#00f948"/><rect x="240" y="162" width="7" height="7" fill="#00c000"/><rect x="247" y="162" width="8" height="7" fill="#008b00"/><rect x="255" y="162" width="7" height="7" fill="#006a00"/><rect x="262" y="162" width="7" height="7" fill="#005200"/><rect x="269" y="162" width="8" height="7" fill="#004100"/><rect x="277" y="162" width="7" height="7" fill="#003500"/><rect x="284" y="162" width="15" height="7" fill="#003100"/><rect x="299" y="162" width="15" height="7" fill="#002500"/><rect x="314" y="162" width="7" height="7" fill="#002100"/><rect x="321" y="162" width="8" height="7" fill="#001400"/><rect x="329" y="162" width="7" height="7" fill="#000800"/><rect x="344" y="162" width="7" height="7" fill="#000400"/><rect x="351" y="162" width="15" height="7" fill="#000c00"/><rect x="-5" y="169" width="7" height="8" fill="#000800"/><rect x="2" y="169" width="22" height="8" fill="#000c00"/><rect x="24" y="169" width="8" height="8" fill="#000800"/><rect x="32" y="169" width="7" height="8" fill="#000c00"/><rect x="39" y="169" width="8" height="8" fill="#001400"/><rect x="47" y="169" width="7" height="8" fill="#001000"/><rect x="54" y="169" width="7" height="8" fill="#001d00"/><rect x="61" y="169" width="8" height="8" fill="#002900"/><rect x="69" y="169" width="7" height="8" fill="#002d00"/><rect x="76" y="169" width="8" height="8" fill="#003900"/><rect x="84" y="169" width="7" height="8" fill="#004500"/><rect x="91" y="169" width="8" height="8" fill="#005600"/><rect x="99" y="169" width="7" height="8" fill="#007200"/><rect x="106" y="169" width="7" height="8" fill="#009f00"/><rect x="113" y="169" width="8" height="8" fill="#00d81d"/><rect x="121" y="169" width="7" height="8" fill="#1be462"/><rect x="128" y="169" width="8" height="8" fill="#689797"/><rect x="136" y="169" width="7" height="8" fill="#c639d8"/><rect x="143" y="169" width="8" height="8" fill="#ff00d6"/><rect x="151" y="169" width="7" height="8" fill="#ff0078"/><rect x="158" y="169" width="7" height="8" fill="#ff002f"/><rect x="165" y="169" width="8" height="8" fill="#ff0200"/><rect x="173" y="169" width="15" height="8" fill="#ff1f00"/><rect x="188" y="169" width="7" height="8" fill="#ff0200"/><rect x="195" y="169" width="8" height="8" fill="#ff002f"/><rect x="203" y="169" width="7" height="8" fill="#ff0078"/><rect x="210" y="169" width="7" height="8" fill="#ff00d6"/><rect x="217" y="169" width="8" height="8" fill="#c639d8"/><rect x="225" y="169" width="7" height="8" fill="#689797"/><rect x="232" y="169" width="8" height="8" fill="#1be462"/><rect x="240" y="169" width="7" height="8" fill="#00d81d"/><rect x="247" y="169" width="8" height="8" fill="#009b00"/><rect x="255" y="169" width="7" height="8" fill="#006e00"/><rect x="262" y="169" width="7" height="8" fill="#005600"/><rect x="269" y="169" width="8" height="8" fill="#004100"/><rect x="277" y="169" width="7" height="8" fill="#003900"/><rect x="284" y="169" width="15" height="8" fill="#003100"/><rect x="299" y="169" width="8" height="8" fill="#002500"/><rect x="307" y="169" width="14" height="8" fill="#002100"/><rect x="321" y="169" width="8" height="8" fill="#001900"/><rect x="329" y="169" width="7" height="8" fill="#001000"/><rect x="336" y="169" width="8" height="8" fill="#000800"/><rect x="344" y="169" width="15" height="8" fill="#001000"/><rect x="359" y="169" width="7" height="8" fill="#000c00"/><rect x="-5" y="177" width="22" height="7" fill="#001000"/><rect x="17" y="177" width="7" height="7" fill="#000c00"/><rect x="24" y="177" width="8" height="7" fill="#001000"/><rect x="32" y="177" width="7" height="7" fill="#001400"/><rect x="39" y="177" width="15" height="7" fill="#001900"/><rect x="54" y="177" width="7" height="7" fill="#001d00"/><rect x="61" y="177" width="15" height="7" fill="#002900"/><rect x="76" y="177" width="8" height="7" fill="#003900"/><rect x="84" y="177" width="7" height="7" fill="#004a00"/><rect x="91" y="177" width="8" height="7" fill="#006200"/><rect x="99" y="177" width="7" height="7" fill="#007f00"/><rect x="106" y="177" width="7" height="7" fill="#00ac00"/><rect x="113" y="177" width="8" height="7" fill="#00e52d"/><rect x="121" y="177" width="7" height="7" fill="#27d86b"/><rect x="128" y="177" width="8" height="7" fill="#817ea8"/><rect x="136" y="177" width="7" height="7" fill="#e718ee"/><rect x="143" y="177" width="8" height="7" fill="#ff00ad"/><rect x="151" y="177" width="7" height="7" fill="#ff004b"/><rect x="158" y="177" width="7" height="7" fill="#ff0200"/><rect x="165" y="177" width="8" height="7" fill="#ff4b00"/><rect x="173" y="177" width="15" height="7" fill="#ff8500"/><rect x="188" y="177" width="7" height="7" fill="#ff4b00"/><rect x="195" y="177" width="8" height="7" fill="#ff0200"/><rect x="203" y="177" width="7" height="7" fill="#ff004b"/><rect x="210" y="177" width="7" height="7" fill="#ff00ad"/><rect x="217" y="177" width="8" height="7" fill="#e718ee"/><rect x="225" y="177" width="7" height="7" fill="#817ea8"/><rect x="232" y="177" width="8" height="7" fill="#27d86b"/><rect x="240" y="177" width="7" height="7" fill="#00e52d"/><rect x="247" y="177" width="8" height="7" fill="#00a700"/><rect x="255" y="177" width="7" height="7" fill="#007b00"/><rect x="262" y="177" width="7" height="7" fill="#005a00"/><rect x="269" y="177" width="8" height="7" fill="#004a00"/><rect x="277" y="177" width="7" height="7" fill="#003d00"/><rect x="284" y="177" width="8" height="7" fill="#002d00"/><rect x="292" y="177" width="7" height="7" fill="#002500"/><rect x="299" y="177" width="15" height="7" fill="#002100"/><rect x="314" y="177" width="7" height="7" fill="#001d00"/><rect x="321" y="177" width="8" height="7" fill="#001400"/><rect x="329" y="177" width="22" height="7" fill="#001000"/><rect x="351" y="177" width="8" height="7" fill="#001400"/><rect x="359" y="177" width="7" height="7" fill="#000800"/><rect x="-5" y="184" width="22" height="8" fill="#001000"/><rect x="17" y="184" width="7" height="8" fill="#001400"/><rect x="24" y="184" width="8" height="8" fill="#001000"/><rect x="32" y="184" width="7" height="8" fill="#001400"/><rect x="39" y="184" width="8" height="8" fill="#001000"/><rect x="47" y="184" width="7" height="8" fill="#001900"/><rect x="54" y="184" width="7" height="8" fill="#001d00"/><rect x="61" y="184" width="8" height="8" fill="#002900"/><rect x="69" y="184" width="7" height="8" fill="#002d00"/><rect x="76" y="184" width="8" height="8" fill="#003900"/><rect x="84" y="184" width="7" height="8" fill="#004a00"/><rect x="91" y="184" width="8" height="8" fill="#005e00"/><rect x="99" y="184" width="7" height="8" fill="#007f00"/><rect x="106" y="184" width="7" height="8" fill="#00b400"/><rect x="113" y="184" width="8" height="8" fill="#00f13d"/><rect x="121" y="184" width="7" height="8" fill="#2fd070"/><rect x="128" y="184" width="8" height="8" fill="#8d72b1"/><rect x="136" y="184" width="7" height="8" fill="#f708f9"/><rect x="143" y="184" width="8" height="8" fill="#ff0095"/><rect x="151" y="184" width="7" height="8" fill="#ff0033"/><rect x="158" y="184" width="7" height="8" fill="#ff1f00"/><rect x="165" y="184" width="8" height="8" fill="#ff8500"/><rect x="173" y="184" width="15" height="8" fill="#ffff00"/><rect x="188" y="184" width="7" height="8" fill="#ff8500"/><rect x="195" y="184" width="8" height="8" fill="#ff1f00"/><rect x="203" y="184" width="7" height="8" fill="#ff0033"/><rect x="210" y="184" width="7" height="8" fill="#ff0095"/><rect x="217" y="184" width="8" height="8" fill="#f708f9"/><rect x="225" y="184" width="7" height="8" fill="#8d72b1"/><rect x="232" y="184" width="8" height="8" fill="#2fd070"/><rect x="240" y="184" width="7" height="8" fill="#00ed38"/><rect x="247" y="184" width="8" height="8" fill="#00b000"/><rect x="255" y="184" width="7" height="8" fill="#007f00"/><rect x="262" y="184" width="7" height="8" fill="#005e00"/><rect x="269" y="184" width="8" height="8" fill="#004500"/><rect x="277" y="184" width="7" height="8" fill="#003d00"/><rect x="284" y="184" width="8" height="8" fill="#002900"/><rect x="292" y="184" width="7" height="8" fill="#002500"/><rect x="299" y="184" width="8" height="8" fill="#001d00"/><rect x="307" y="184" width="7" height="8" fill="#002100"/><rect x="314" y="184" width="7" height="8" fill="#001900"/><rect x="321" y="184" width="15" height="8" fill="#001000"/><rect x="336" y="184" width="15" height="8" fill="#000c00"/><rect x="351" y="184" width="8" height="8" fill="#001000"/><rect x="359" y="184" width="7" height="8" fill="#000c00"/><rect x="-5" y="192" width="14" height="7" fill="#001000"/><rect x="9" y="192" width="8" height="7" fill="#001400"/><rect x="17" y="192" width="7" height="7" fill="#001000"/><rect x="24" y="192" width="8" height="7" fill="#000c00"/><rect x="32" y="192" width="7" height="7" fill="#001000"/><rect x="39" y="192" width="8" height="7" fill="#000c00"/><rect x="47" y="192" width="7" height="7" fill="#001900"/><rect x="54" y="192" width="7" height="7" fill="#002100"/><rect x="61" y="192" width="8" height="7" fill="#002d00"/><rect x="69" y="192" width="7" height="7" fill="#003100"/><rect x="76" y="192" width="8" height="7" fill="#003900"/><rect x="84" y="192" width="7" height="7" fill="#004500"/><rect x="91" y="192" width="8" height="7" fill="#005a00"/><rect x="99" y="192" width="7" height="7" fill="#007b00"/><rect x="106" y="192" width="7" height="7" fill="#00b000"/><rect x="113" y="192" width="8" height="7" fill="#00e933"/><rect x="121" y="192" width="7" height="7" fill="#2fd070"/><rect x="128" y="192" width="8" height="7" fill="#8d72b1"/><rect x="136" y="192" width="7" height="7" fill="#f708f9"/><rect x="143" y="192" width="8" height="7" fill="#ff0095"/><rect x="151" y="192" width="7" height="7" fill="#ff0033"/><rect x="158" y="192" width="7" height="7" fill="#ff1f00"/><rect x="165" y="192" width="8" height="7" fill="#ff8500"/><rect x="173" y="192" width="15" height="7" fill="#ffff00"/><rect x="188" y="192" width="7" height="7" fill="#ff8500"/><rect x="195" y="192" width="8" height="7" fill="#ff1f00"/><rect x="203" y="192" width="7" height="7" fill="#ff0033"/><rect x="210" y="192" width="7" height="7" fill="#ff0095"/><rect x="217" y="192" width="8" height="7" fill="#f708f9"/><rect x="225" y="192" width="7" height="7" fill="#8d72b1"/><rect x="232" y="192" width="8" height="7" fill="#2fd070"/><rect x="240" y="192" width="7" height="7" fill="#00e933"/><rect x="247" y="192" width="8" height="7" fill="#00ac00"/><rect x="255" y="192" width="7" height="7" fill="#007f00"/><rect x="262" y="192" width="7" height="7" fill="#005a00"/><rect x="269" y="192" width="8" height="7" fill="#004500"/><rect x="277" y="192" width="7" height="7" fill="#003d00"/><rect x="284" y="192" width="8" height="7" fill="#003100"/><rect x="292" y="192" width="7" height="7" fill="#002900"/><rect x="299" y="192" width="15" height="7" fill="#002100"/><rect x="314" y="192" width="7" height="7" fill="#001d00"/><rect x="321" y="192" width="8" height="7" fill="#001900"/><rect x="329" y="192" width="15" height="7" fill="#001400"/><rect x="344" y="192" width="15" height="7" fill="#000c00"/><rect x="359" y="192" width="7" height="7" fill="#001400"/><rect x="-5" y="199" width="14" height="7" fill="#001000"/><rect x="9" y="199" width="8" height="7" fill="#001400"/><rect x="17" y="199" width="7" height="7" fill="#001000"/><rect x="24" y="199" width="8" height="7" fill="#000c00"/><rect x="32" y="199" width="7" height="7" fill="#001400"/><rect x="39" y="199" width="8" height="7" fill="#001900"/><rect x="47" y="199" width="7" height="7" fill="#001d00"/><rect x="54" y="199" width="7" height="7" fill="#002100"/><rect x="61" y="199" width="8" height="7" fill="#003100"/><rect x="69" y="199" width="7" height="7" fill="#003500"/><rect x="76" y="199" width="8" height="7" fill="#003d00"/><rect x="84" y="199" width="7" height="7" fill="#004a00"/><rect x="91" y="199" width="8" height="7" fill="#006200"/><rect x="99" y="199" width="7" height="7" fill="#008300"/><rect x="106" y="199" width="7" height="7" fill="#00ac00"/><rect x="113" y="199" width="8" height="7" fill="#00e028"/><rect x="121" y="199" width="7" height="7" fill="#27d86b"/><rect x="128" y="199" width="8" height="7" fill="#817ea8"/><rect x="136" y="199" width="7" height="7" fill="#e718ee"/><rect x="143" y="199" width="8" height="7" fill="#ff00ad"/><rect x="151" y="199" width="7" height="7" fill="#ff004b"/><rect x="158" y="199" width="7" height="7" fill="#ff0200"/><rect x="165" y="199" width="8" height="7" fill="#ff4b00"/><rect x="173" y="199" width="15" height="7" fill="#ff8500"/><rect x="188" y="199" width="7" height="7" fill="#ff4b00"/><rect x="195" y="199" width="8" height="7" fill="#ff0200"/><rect x="203" y="199" width="7" height="7" fill="#ff004b"/><rect x="210" y="199" width="7" height="7" fill="#ff00ad"/><rect x="217" y="199" width="8" height="7" fill="#e718ee"/><rect x="225" y="199" width="7" height="7" fill="#817ea8"/><rect x="232" y="199" width="8" height="7" fill="#27d86b"/><rect x="240" y="199" width="7" height="7" fill="#00e028"/><rect x="247" y="199" width="8" height="7" fill="#00a300"/><rect x="255" y="199" width="7" height="7" fill="#007600"/><rect x="262" y="199" width="7" height="7" fill="#005a00"/><rect x="269" y="199" width="8" height="7" fill="#003d00"/><rect x="277" y="199" width="7" height="7" fill="#003900"/><rect x="284" y="199" width="8" height="7" fill="#003500"/><rect x="292" y="199" width="7" height="7" fill="#002d00"/><rect x="299" y="199" width="8" height="7" fill="#002500"/><rect x="307" y="199" width="7" height="7" fill="#002100"/><rect x="314" y="199" width="7" height="7" fill="#001d00"/><rect x="321" y="199" width="23" height="7" fill="#001900"/><rect x="344" y="199" width="7" height="7" fill="#001000"/><rect x="351" y="199" width="8" height="7" fill="#000800"/><rect x="359" y="199" width="7" height="7" fill="#000400"/><rect x="-5" y="206" width="22" height="8" fill="#001400"/><rect x="17" y="206" width="15" height="8" fill="#001000"/><rect x="32" y="206" width="7" height="8" fill="#001d00"/><rect x="39" y="206" width="22" height="8" fill="#002100"/><rect x="61" y="206" width="8" height="8" fill="#002d00"/><rect x="69" y="206" width="15" height="8" fill="#003500"/><rect x="84" y="206" width="7" height="8" fill="#004100"/><rect x="91" y="206" width="8" height="8" fill="#005a00"/><rect x="99" y="206" width="7" height="8" fill="#007b00"/><rect x="106" y="206" width="7" height="8" fill="#00a700"/><rect x="113" y="206" width="8" height="8" fill="#00d418"/><rect x="121" y="206" width="7" height="8" fill="#1be462"/><rect x="128" y="206" width="8" height="8" fill="#689797"/><rect x="136" y="206" width="7" height="8" fill="#c639d8"/><rect x="143" y="206" width="8" height="8" fill="#ff00d6"/><rect x="151" y="206" width="7" height="8" fill="#ff0078"/><rect x="158" y="206" width="7" height="8" fill="#ff002f"/><rect x="165" y="206" width="8" height="8" fill="#ff0200"/><rect x="173" y="206" width="15" height="8" fill="#ff1f00"/><rect x="188" y="206" width="7" height="8" fill="#ff0200"/><rect x="195" y="206" width="8" height="8" fill="#ff002f"/><rect x="203" y="206" width="7" height="8" fill="#ff0078"/><rect x="210" y="206" width="7" height="8" fill="#ff00d6"/><rect x="217" y="206" width="8" height="8" fill="#c639d8"/><rect x="225" y="206" width="7" height="8" fill="#689797"/><rect x="232" y="206" width="8" height="8" fill="#1be462"/><rect x="240" y="206" width="7" height="8" fill="#00d418"/><rect x="247" y="206" width="8" height="8" fill="#00a700"/><rect x="255" y="206" width="7" height="8" fill="#007b00"/><rect x="262" y="206" width="7" height="8" fill="#005600"/><rect x="269" y="206" width="8" height="8" fill="#004100"/><rect x="277" y="206" width="7" height="8" fill="#003d00"/><rect x="284" y="206" width="8" height="8" fill="#003100"/><rect x="292" y="206" width="7" height="8" fill="#002d00"/><rect x="299" y="206" width="8" height="8" fill="#002900"/><rect x="307" y="206" width="7" height="8" fill="#002100"/><rect x="314" y="206" width="7" height="8" fill="#001900"/><rect x="321" y="206" width="8" height="8" fill="#001400"/><rect x="329" y="206" width="7" height="8" fill="#001000"/><rect x="336" y="206" width="8" height="8" fill="#001400"/><rect x="344" y="206" width="7" height="8" fill="#001000"/><rect x="351" y="206" width="8" height="8" fill="#000400"/><rect x="-5" y="214" width="7" height="7" fill="#001400"/><rect x="2" y="214" width="7" height="7" fill="#001d00"/><rect x="9" y="214" width="15" height="7" fill="#001900"/><rect x="24" y="214" width="8" height="7" fill="#000c00"/><rect x="32" y="214" width="7" height="7" fill="#001000"/><rect x="39" y="214" width="8" height="7" fill="#001400"/><rect x="47" y="214" width="7" height="7" fill="#001900"/><rect x="54" y="214" width="7" height="7" fill="#002500"/><rect x="61" y="214" width="8" height="7" fill="#002900"/><rect x="69" y="214" width="15" height="7" fill="#003100"/><rect x="84" y="214" width="7" height="7" fill="#003900"/><rect x="91" y="214" width="8" height="7" fill="#005200"/><rect x="99" y="214" width="7" height="7" fill="#006e00"/><rect x="106" y="214" width="7" height="7" fill="#009300"/><rect x="113" y="214" width="8" height="7" fill="#00c403"/><rect x="121" y="214" width="7" height="7" fill="#00f948"/><rect x="128" y="214" width="8" height="7" fill="#47b881"/><rect x="136" y="214" width="7" height="7" fill="#9966b9"/><rect x="143" y="214" width="8" height="7" fill="#ef10f4"/><rect x="151" y="214" width="7" height="7" fill="#ff00be"/><rect x="158" y="214" width="7" height="7" fill="#ff0078"/><rect x="165" y="214" width="8" height="7" fill="#ff004b"/><rect x="173" y="214" width="15" height="7" fill="#ff0033"/><rect x="188" y="214" width="7" height="7" fill="#ff004b"/><rect x="195" y="214" width="8" height="7" fill="#ff0078"/><rect x="203" y="214" width="7" height="7" fill="#ff00be"/><rect x="210" y="214" width="7" height="7" fill="#ef10f4"/><rect x="217" y="214" width="8" height="7" fill="#9966b9"/><rect x="225" y="214" width="7" height="7" fill="#47b881"/><rect x="232" y="214" width="8" height="7" fill="#00fd4d"/><rect x="240" y="214" width="7" height="7" fill="#00cc0d"/><rect x="247" y="214" width="8" height="7" fill="#009f00"/><rect x="255" y="214" width="7" height="7" fill="#007200"/><rect x="262" y="214" width="7" height="7" fill="#004e00"/><rect x="269" y="214" width="8" height="7" fill="#003d00"/><rect x="277" y="214" width="15" height="7" fill="#003900"/><rect x="292" y="214" width="7" height="7" fill="#002900"/><rect x="299" y="214" width="8" height="7" fill="#002d00"/><rect x="307" y="214" width="7" height="7" fill="#001d00"/><rect x="314" y="214" width="7" height="7" fill="#001900"/><rect x="321" y="214" width="15" height="7" fill="#001400"/><rect x="336" y="214" width="8" height="7" fill="#000c00"/><rect x="344" y="214" width="7" height="7" fill="#000800"/><rect x="351" y="214" width="15" height="7" fill="#000400"/><rect x="-5" y="221" width="29" height="8" fill="#001000"/><rect x="24" y="221" width="8" height="8" fill="#001400"/><rect x="32" y="221" width="15" height="8" fill="#000c00"/><rect x="47" y="221" width="7" height="8" fill="#001900"/><rect x="54" y="221" width="7" height="8" fill="#002100"/><rect x="61" y="221" width="8" height="8" fill="#002d00"/><rect x="69" y="221" width="7" height="8" fill="#003100"/><rect x="76" y="221" width="8" height="8" fill="#003900"/><rect x="84" y="221" width="7" height="8" fill="#004100"/><rect x="91" y="221" width="8" height="8" fill="#005200"/><rect x="99" y="221" width="7" height="8" fill="#006a00"/><rect x="106" y="221" width="7" height="8" fill="#008700"/><rect x="113" y="221" width="8" height="8" fill="#00ac00"/><rect x="121" y="221" width="7" height="8" fill="#00e028"/><rect x="128" y="221" width="8" height="8" fill="#23dc68"/><rect x="136" y="221" width="7" height="8" fill="#649b95"/><rect x="143" y="221" width="8" height="8" fill="#a956c4"/><rect x="151" y="221" width="7" height="8" fill="#ef10f4"/><rect x="158" y="221" width="7" height="8" fill="#ff00d6"/><rect x="165" y="221" width="8" height="8" fill="#ff00ad"/><rect x="173" y="221" width="15" height="8" fill="#ff0095"/><rect x="188" y="221" width="7" height="8" fill="#ff00ad"/><rect x="195" y="221" width="8" height="8" fill="#ff00d6"/><rect x="203" y="221" width="7" height="8" fill="#ef10f4"/><rect x="210" y="221" width="7" height="8" fill="#a956c4"/><rect x="217" y="221" width="8" height="8" fill="#649b95"/><rect x="225" y="221" width="7" height="8" fill="#23dc68"/><rect x="232" y="221" width="8" height="8" fill="#00e933"/><rect x="240" y="221" width="7" height="8" fill="#00b400"/><rect x="247" y="221" width="8" height="8" fill="#008b00"/><rect x="255" y="221" width="7" height="8" fill="#006a00"/><rect x="262" y="221" width="7" height="8" fill="#004e00"/><rect x="269" y="221" width="8" height="8" fill="#003900"/><rect x="277" y="221" width="7" height="8" fill="#003500"/><rect x="284" y="221" width="8" height="8" fill="#002900"/><rect x="292" y="221" width="7" height="8" fill="#002500"/><rect x="299" y="221" width="8" height="8" fill="#002100"/><rect x="307" y="221" width="22" height="8" fill="#001d00"/><rect x="329" y="221" width="7" height="8" fill="#001900"/><rect x="336" y="221" width="8" height="8" fill="#001000"/><rect x="344" y="221" width="7" height="8" fill="#000400"/><rect x="351" y="221" width="8" height="8" fill="#000800"/><rect x="359" y="221" width="7" height="8" fill="#000c00"/><rect x="-5" y="229" width="22" height="7" fill="#000c00"/><rect x="17" y="229" width="22" height="7" fill="#001400"/><rect x="39" y="229" width="8" height="7" fill="#001900"/><rect x="47" y="229" width="7" height="7" fill="#002100"/><rect x="54" y="229" width="15" height="7" fill="#002500"/><rect x="69" y="229" width="7" height="7" fill="#003100"/><rect x="76" y="229" width="8" height="7" fill="#003500"/><rect x="84" y="229" width="7" height="7" fill="#004100"/><rect x="91" y="229" width="8" height="7" fill="#005200"/><rect x="99" y="229" width="7" height="7" fill="#006200"/><rect x="106" y="229" width="7" height="7" fill="#007600"/><rect x="113" y="229" width="8" height="7" fill="#009b00"/><rect x="121" y="229" width="7" height="7" fill="#00c000"/><rect x="128" y="229" width="8" height="7" fill="#00f543"/><rect x="136" y="229" width="7" height="7" fill="#2bd46d"/><rect x="143" y="229" width="8" height="7" fill="#649b95"/><rect x="151" y="229" width="7" height="7" fill="#9966b9"/><rect x="158" y="229" width="7" height="7" fill="#c639d8"/><rect x="165" y="229" width="8" height="7" fill="#e718ee"/><rect x="173" y="229" width="15" height="7" fill="#f708f9"/><rect x="188" y="229" width="7" height="7" fill="#e718ee"/><rect x="195" y="229" width="8" height="7" fill="#c639d8"/><rect x="203" y="229" width="7" height="7" fill="#9966b9"/><rect x="210" y="229" width="7" height="7" fill="#649b95"/><rect x="217" y="229" width="8" height="7" fill="#2bd46d"/><rect x="225" y="229" width="7" height="7" fill="#00f13d"/><rect x="232" y="229" width="8" height="7" fill="#00c403"/><rect x="240" y="229" width="7" height="7" fill="#009b00"/><rect x="247" y="229" width="8" height="7" fill="#007600"/><rect x="255" y="229" width="7" height="7" fill="#006200"/><rect x="262" y="229" width="7" height="7" fill="#004a00"/><rect x="269" y="229" width="8" height="7" fill="#003900"/><rect x="277" y="229" width="7" height="7" fill="#003100"/><rect x="284" y="229" width="8" height="7" fill="#002d00"/><rect x="292" y="229" width="7" height="7" fill="#001d00"/><rect x="299" y="229" width="22" height="7" fill="#002100"/><rect x="321" y="229" width="15" height="7" fill="#001d00"/><rect x="336" y="229" width="8" height="7" fill="#001400"/><rect x="344" y="229" width="7" height="7" fill="#000c00"/><rect x="351" y="229" width="8" height="7" fill="#001000"/><rect x="359" y="229" width="7" height="7" fill="#000800"/><rect x="-5" y="236" width="7" height="8" fill="#000c00"/><rect x="2" y="236" width="7" height="8" fill="#000800"/><rect x="9" y="236" width="8" height="8" fill="#001000"/><rect x="17" y="236" width="7" height="8" fill="#001400"/><rect x="24" y="236" width="8" height="8" fill="#001900"/><rect x="32" y="236" width="7" height="8" fill="#001400"/><rect x="39" y="236" width="8" height="8" fill="#001900"/><rect x="47" y="236" width="7" height="8" fill="#002100"/><rect x="54" y="236" width="7" height="8" fill="#001d00"/><rect x="61" y="236" width="8" height="8" fill="#002100"/><rect x="69" y="236" width="7" height="8" fill="#002900"/><rect x="76" y="236" width="8" height="8" fill="#002d00"/><rect x="84" y="236" width="7" height="8" fill="#003900"/><rect x="91" y="236" width="8" height="8" fill="#004500"/><rect x="99" y="236" width="7" height="8" fill="#005200"/><rect x="106" y="236" width="7" height="8" fill="#006200"/><rect x="113" y="236" width="8" height="8" fill="#007f00"/><rect x="121" y="236" width="7" height="8" fill="#009f00"/><rect x="128" y="236" width="8" height="8" fill="#00c808"/><rect x="136" y="236" width="7" height="8" fill="#00f948"/><rect x="143" y="236" width="8" height="8" fill="#23dc68"/><rect x="151" y="236" width="7" height="8" fill="#47b881"/><rect x="158" y="236" width="7" height="8" fill="#689797"/><rect x="165" y="236" width="8" height="8" fill="#817ea8"/><rect x="173" y="236" width="15" height="8" fill="#8d72b1"/><rect x="188" y="236" width="7" height="8" fill="#817ea8"/><rect x="195" y="236" width="8" height="8" fill="#689797"/><rect x="203" y="236" width="7" height="8" fill="#47b881"/><rect x="210" y="236" width="7" height="8" fill="#23dc68"/><rect x="217" y="236" width="8" height="8" fill="#00f543"/><rect x="225" y="236" width="7" height="8" fill="#00cc0d"/><rect x="232" y="236" width="8" height="8" fill="#00a700"/><rect x="240" y="236" width="7" height="8" fill="#008300"/><rect x="247" y="236" width="8" height="8" fill="#006a00"/><rect x="255" y="236" width="7" height="8" fill="#005600"/><rect x="262" y="236" width="7" height="8" fill="#004a00"/><rect x="269" y="236" width="8" height="8" fill="#003900"/><rect x="277" y="236" width="7" height="8" fill="#002d00"/><rect x="284" y="236" width="8" height="8" fill="#002900"/><rect x="292" y="236" width="7" height="8" fill="#002100"/><rect x="299" y="236" width="8" height="8" fill="#001d00"/><rect x="307" y="236" width="14" height="8" fill="#002100"/><rect x="321" y="236" width="8" height="8" fill="#001d00"/><rect x="329" y="236" width="15" height="8" fill="#001900"/><rect x="344" y="236" width="15" height="8" fill="#001000"/><rect x="359" y="236" width="7" height="8" fill="#000800"/><rect x="-5" y="244" width="14" height="7" fill="#000800"/><rect x="9" y="244" width="8" height="7" fill="#001000"/><rect x="17" y="244" width="7" height="7" fill="#001900"/><rect x="24" y="244" width="8" height="7" fill="#001400"/><rect x="32" y="244" width="7" height="7" fill="#001000"/><rect x="39" y="244" width="8" height="7" fill="#001900"/><rect x="47" y="244" width="14" height="7" fill="#001d00"/><rect x="61" y="244" width="8" height="7" fill="#002500"/><rect x="69" y="244" width="7" height="7" fill="#002d00"/><rect x="76" y="244" width="8" height="7" fill="#002900"/><rect x="84" y="244" width="7" height="7" fill="#003100"/><rect x="91" y="244" width="8" height="7" fill="#003d00"/><rect x="99" y="244" width="7" height="7" fill="#004a00"/><rect x="106" y="244" width="7" height="7" fill="#005a00"/><rect x="113" y="244" width="8" height="7" fill="#006e00"/><rect x="121" y="244" width="7" height="7" fill="#007f00"/><rect x="128" y="244" width="8" height="7" fill="#009b00"/><rect x="136" y="244" width="7" height="7" fill="#00c403"/><rect x="143" y="244" width="8" height="7" fill="#00e933"/><rect x="151" y="244" width="7" height="7" fill="#0af557"/><rect x="158" y="244" width="7" height="7" fill="#1be462"/><rect x="165" y="244" width="8" height="7" fill="#27d86b"/><rect x="173" y="244" width="15" height="7" fill="#2fd070"/><rect x="188" y="244" width="7" height="7" fill="#27d86b"/><rect x="195" y="244" width="8" height="7" fill="#1be462"/><rect x="203" y="244" width="7" height="7" fill="#06f954"/><rect x="210" y="244" width="7" height="7" fill="#00e933"/><rect x="217" y="244" width="8" height="7" fill="#00c403"/><rect x="225" y="244" width="7" height="7" fill="#009f00"/><rect x="232" y="244" width="8" height="7" fill="#008700"/><rect x="240" y="244" width="7" height="7" fill="#006a00"/><rect x="247" y="244" width="8" height="7" fill="#005600"/><rect x="255" y="244" width="7" height="7" fill="#004a00"/><rect x="262" y="244" width="7" height="7" fill="#003d00"/><rect x="269" y="244" width="8" height="7" fill="#003100"/><rect x="277" y="244" width="7" height="7" fill="#002d00"/><rect x="284" y="244" width="8" height="7" fill="#002500"/><rect x="292" y="244" width="7" height="7" fill="#002100"/><rect x="299" y="244" width="15" height="7" fill="#001d00"/><rect x="314" y="244" width="15" height="7" fill="#001900"/><rect x="329" y="244" width="7" height="7" fill="#001400"/><rect x="336" y="244" width="23" height="7" fill="#001000"/><rect x="359" y="244" width="7" height="7" fill="#000400"/><rect x="-5" y="251" width="14" height="7" fill="#001000"/><rect x="9" y="251" width="23" height="7" fill="#001400"/><rect x="32" y="251" width="7" height="7" fill="#001000"/><rect x="39" y="251" width="15" height="7" fill="#001400"/><rect x="54" y="251" width="15" height="7" fill="#001900"/><rect x="69" y="251" width="15" height="7" fill="#001d00"/><rect x="84" y="251" width="7" height="7" fill="#002900"/><rect x="91" y="251" width="8" height="7" fill="#003500"/><rect x="99" y="251" width="7" height="7" fill="#004e00"/><rect x="106" y="251" width="7" height="7" fill="#005600"/><rect x="113" y="251" width="8" height="7" fill="#005e00"/><rect x="121" y="251" width="7" height="7" fill="#006a00"/><rect x="128" y="251" width="8" height="7" fill="#007f00"/><rect x="136" y="251" width="7" height="7" fill="#009700"/><rect x="143" y="251" width="8" height="7" fill="#00b000"/><rect x="151" y="251" width="7" height="7" fill="#00cc0d"/><rect x="158" y="251" width="7" height="7" fill="#00d418"/><rect x="165" y="251" width="8" height="7" fill="#00e028"/><rect x="173" y="251" width="7" height="7" fill="#00e933"/><rect x="180" y="251" width="8" height="7" fill="#00ed38"/><rect x="188" y="251" width="7" height="7" fill="#00e52d"/><rect x="195" y="251" width="8" height="7" fill="#00d81d"/><rect x="203" y="251" width="7" height="7" fill="#00cc0d"/><rect x="210" y="251" width="7" height="7" fill="#00b000"/><rect x="217" y="251" width="8" height="7" fill="#009300"/><rect x="225" y="251" width="7" height="7" fill="#007f00"/><rect x="232" y="251" width="8" height="7" fill="#006a00"/><rect x="240" y="251" width="7" height="7" fill="#005a00"/><rect x="247" y="251" width="8" height="7" fill="#004e00"/><rect x="255" y="251" width="7" height="7" fill="#004100"/><rect x="262" y="251" width="7" height="7" fill="#003900"/><rect x="269" y="251" width="8" height="7" fill="#002d00"/><rect x="277" y="251" width="15" height="7" fill="#002900"/><rect x="292" y="251" width="15" height="7" fill="#002100"/><rect x="307" y="251" width="14" height="7" fill="#001d00"/><rect x="321" y="251" width="8" height="7" fill="#002100"/><rect x="329" y="251" width="15" height="7" fill="#001000"/><rect x="344" y="251" width="7" height="7" fill="#000c00"/><rect x="351" y="251" width="8" height="7" fill="#001000"/><rect x="359" y="251" width="7" height="7" fill="#000c00"/><rect x="-5" y="258" width="14" height="8" fill="#001000"/><rect x="9" y="258" width="8" height="8" fill="#000c00"/><rect x="17" y="258" width="7" height="8" fill="#001000"/><rect x="24" y="258" width="8" height="8" fill="#001900"/><rect x="32" y="258" width="15" height="8" fill="#001d00"/><rect x="47" y="258" width="7" height="8" fill="#001400"/><rect x="54" y="258" width="15" height="8" fill="#001d00"/><rect x="69" y="258" width="7" height="8" fill="#001900"/><rect x="76" y="258" width="8" height="8" fill="#001d00"/><rect x="84" y="258" width="7" height="8" fill="#002900"/><rect x="91" y="258" width="8" height="8" fill="#003100"/><rect x="99" y="258" width="7" height="8" fill="#003d00"/><rect x="106" y="258" width="7" height="8" fill="#004500"/><rect x="113" y="258" width="8" height="8" fill="#004100"/><rect x="121" y="258" width="7" height="8" fill="#005200"/><rect x="128" y="258" width="8" height="8" fill="#006600"/><rect x="136" y="258" width="7" height="8" fill="#007b00"/><rect x="143" y="258" width="8" height="8" fill="#008700"/><rect x="151" y="258" width="7" height="8" fill="#009700"/><rect x="158" y="258" width="7" height="8" fill="#009f00"/><rect x="165" y="258" width="8" height="8" fill="#00a300"/><rect x="173" y="258" width="15" height="8" fill="#00ac00"/><rect x="188" y="258" width="7" height="8" fill="#00a700"/><rect x="195" y="258" width="8" height="8" fill="#00a300"/><rect x="203" y="258" width="7" height="8" fill="#009700"/><rect x="210" y="258" width="7" height="8" fill="#008300"/><rect x="217" y="258" width="8" height="8" fill="#006e00"/><rect x="225" y="258" width="7" height="8" fill="#006200"/><rect x="232" y="258" width="8" height="8" fill="#005600"/><rect x="240" y="258" width="7" height="8" fill="#005200"/><rect x="247" y="258" width="8" height="8" fill="#004500"/><rect x="255" y="258" width="7" height="8" fill="#004100"/><rect x="262" y="258" width="7" height="8" fill="#003100"/><rect x="269" y="258" width="8" height="8" fill="#002d00"/><rect x="277" y="258" width="7" height="8" fill="#002900"/><rect x="284" y="258" width="23" height="8" fill="#002100"/><rect x="307" y="258" width="7" height="8" fill="#001d00"/><rect x="314" y="258" width="7" height="8" fill="#001900"/><rect x="321" y="258" width="8" height="8" fill="#001400"/><rect x="329" y="258" width="30" height="8" fill="#000c00"/><rect x="359" y="258" width="7" height="8" fill="#001400"/><rect x="-5" y="266" width="7" height="7" fill="#000800"/><rect x="2" y="266" width="7" height="7" fill="#001000"/><rect x="9" y="266" width="15" height="7" fill="#000c00"/><rect x="24" y="266" width="15" height="7" fill="#001900"/><rect x="39" y="266" width="8" height="7" fill="#001400"/><rect x="47" y="266" width="7" height="7" fill="#001000"/><rect x="54" y="266" width="7" height="7" fill="#001400"/><rect x="61" y="266" width="15" height="7" fill="#002100"/><rect x="76" y="266" width="8" height="7" fill="#002900"/><rect x="84" y="266" width="15" height="7" fill="#002d00"/><rect x="99" y="266" width="14" height="7" fill="#003100"/><rect x="113" y="266" width="8" height="7" fill="#003900"/><rect x="121" y="266" width="7" height="7" fill="#004500"/><rect x="128" y="266" width="8" height="7" fill="#005600"/><rect x="136" y="266" width="7" height="7" fill="#005e00"/><rect x="143" y="266" width="8" height="7" fill="#006600"/><rect x="151" y="266" width="7" height="7" fill="#007200"/><rect x="158" y="266" width="7" height="7" fill="#007600"/><rect x="165" y="266" width="8" height="7" fill="#007f00"/><rect x="173" y="266" width="7" height="7" fill="#007b00"/><rect x="180" y="266" width="8" height="7" fill="#008300"/><rect x="188" y="266" width="7" height="7" fill="#007b00"/><rect x="195" y="266" width="8" height="7" fill="#007600"/><rect x="203" y="266" width="7" height="7" fill="#006e00"/><rect x="210" y="266" width="15" height="7" fill="#006200"/><rect x="225" y="266" width="7" height="7" fill="#005a00"/><rect x="232" y="266" width="8" height="7" fill="#004100"/><rect x="240" y="266" width="7" height="7" fill="#004500"/><rect x="247" y="266" width="8" height="7" fill="#003500"/><rect x="255" y="266" width="7" height="7" fill="#002d00"/><rect x="262" y="266" width="22" height="7" fill="#002900"/><rect x="284" y="266" width="8" height="7" fill="#001d00"/><rect x="292" y="266" width="15" height="7" fill="#001900"/><rect x="307" y="266" width="14" height="7" fill="#001000"/><rect x="321" y="266" width="15" height="7" fill="#000c00"/><rect x="336" y="266" width="8" height="7" fill="#001400"/><rect x="344" y="266" width="15" height="7" fill="#000c00"/><rect x="359" y="266" width="7" height="7" fill="#001000"/><rect x="-5" y="273" width="7" height="8" fill="#000400"/><rect x="2" y="273" width="7" height="8" fill="#000800"/><rect x="9" y="273" width="15" height="8" fill="#000400"/><rect x="24" y="273" width="8" height="8" fill="#000800"/><rect x="32" y="273" width="7" height="8" fill="#000c00"/><rect x="39" y="273" width="8" height="8" fill="#001000"/><rect x="47" y="273" width="14" height="8" fill="#001400"/><rect x="61" y="273" width="8" height="8" fill="#001d00"/><rect x="69" y="273" width="15" height="8" fill="#002500"/><rect x="84" y="273" width="22" height="8" fill="#002900"/><rect x="106" y="273" width="7" height="8" fill="#002d00"/><rect x="113" y="273" width="8" height="8" fill="#003500"/><rect x="121" y="273" width="7" height="8" fill="#003900"/><rect x="128" y="273" width="8" height="8" fill="#004100"/><rect x="136" y="273" width="7" height="8" fill="#004a00"/><rect x="143" y="273" width="8" height="8" fill="#005200"/><rect x="151" y="273" width="14" height="8" fill="#005e00"/><rect x="165" y="273" width="8" height="8" fill="#006200"/><rect x="173" y="273" width="7" height="8" fill="#005a00"/><rect x="180" y="273" width="8" height="8" fill="#006600"/><rect x="188" y="273" width="7" height="8" fill="#005a00"/><rect x="195" y="273" width="15" height="8" fill="#005600"/><rect x="210" y="273" width="15" height="8" fill="#005200"/><rect x="225" y="273" width="7" height="8" fill="#004500"/><rect x="232" y="273" width="8" height="8" fill="#003500"/><rect x="240" y="273" width="7" height="8" fill="#003900"/><rect x="247" y="273" width="8" height="8" fill="#002d00"/><rect x="255" y="273" width="7" height="8" fill="#002900"/><rect x="262" y="273" width="7" height="8" fill="#002100"/><rect x="269" y="273" width="8" height="8" fill="#002d00"/><rect x="277" y="273" width="7" height="8" fill="#002900"/><rect x="284" y="273" width="8" height="8" fill="#001d00"/><rect x="292" y="273" width="7" height="8" fill="#001900"/><rect x="299" y="273" width="8" height="8" fill="#000800"/><rect x="307" y="273" width="14" height="8" fill="#000c00"/><rect x="321" y="273" width="23" height="8" fill="#001000"/><rect x="344" y="273" width="7" height="8" fill="#000c00"/><rect x="351" y="273" width="15" height="8" fill="#000800"/><rect x="-5" y="281" width="7" height="7" fill="#000400"/><rect x="24" y="281" width="8" height="7" fill="#000400"/><rect x="32" y="281" width="7" height="7" fill="#000800"/><rect x="39" y="281" width="8" height="7" fill="#001400"/><rect x="47" y="281" width="7" height="7" fill="#001000"/><rect x="54" y="281" width="7" height="7" fill="#000c00"/><rect x="61" y="281" width="8" height="7" fill="#001400"/><rect x="69" y="281" width="7" height="7" fill="#001d00"/><rect x="76" y="281" width="15" height="7" fill="#002500"/><rect x="91" y="281" width="22" height="7" fill="#002900"/><rect x="113" y="281" width="8" height="7" fill="#003100"/><rect x="121" y="281" width="7" height="7" fill="#003500"/><rect x="128" y="281" width="8" height="7" fill="#003900"/><rect x="136" y="281" width="7" height="7" fill="#003d00"/><rect x="143" y="281" width="8" height="7" fill="#004100"/><rect x="151" y="281" width="14" height="7" fill="#004a00"/><rect x="165" y="281" width="8" height="7" fill="#004e00"/><rect x="173" y="281" width="7" height="7" fill="#004a00"/><rect x="180" y="281" width="8" height="7" fill="#005200"/><rect x="188" y="281" width="7" height="7" fill="#004e00"/><rect x="195" y="281" width="8" height="7" fill="#004100"/><rect x="203" y="281" width="7" height="7" fill="#004500"/><rect x="210" y="281" width="7" height="7" fill="#003d00"/><rect x="217" y="281" width="8" height="7" fill="#003900"/><rect x="225" y="281" width="15" height="7" fill="#003500"/><rect x="240" y="281" width="7" height="7" fill="#003d00"/><rect x="247" y="281" width="8" height="7" fill="#003100"/><rect x="255" y="281" width="22" height="7" fill="#002900"/><rect x="277" y="281" width="7" height="7" fill="#002100"/><rect x="284" y="281" width="8" height="7" fill="#001900"/><rect x="292" y="281" width="7" height="7" fill="#001400"/><rect x="299" y="281" width="22" height="7" fill="#000c00"/><rect x="321" y="281" width="8" height="7" fill="#000800"/><rect x="329" y="281" width="15" height="7" fill="#000c00"/><rect x="344" y="281" width="22" height="7" fill="#000800"/><rect x="-5" y="288" width="22" height="8" fill="#000400"/><rect x="17" y="288" width="7" height="8" fill="#000800"/><rect x="24" y="288" width="8" height="8" fill="#000c00"/><rect x="32" y="288" width="7" height="8" fill="#001400"/><rect x="39" y="288" width="8" height="8" fill="#001900"/><rect x="47" y="288" width="7" height="8" fill="#000c00"/><rect x="54" y="288" width="7" height="8" fill="#000800"/><rect x="61" y="288" width="8" height="8" fill="#001000"/><rect x="69" y="288" width="7" height="8" fill="#001400"/><rect x="76" y="288" width="8" height="8" fill="#001d00"/><rect x="84" y="288" width="15" height="8" fill="#002100"/><rect x="99" y="288" width="7" height="8" fill="#002900"/><rect x="106" y="288" width="7" height="8" fill="#002500"/><rect x="113" y="288" width="8" height="8" fill="#002d00"/><rect x="121" y="288" width="7" height="8" fill="#003100"/><rect x="128" y="288" width="15" height="8" fill="#003500"/><rect x="143" y="288" width="8" height="8" fill="#003100"/><rect x="151" y="288" width="7" height="8" fill="#003900"/><rect x="158" y="288" width="22" height="8" fill="#003500"/><rect x="180" y="288" width="8" height="8" fill="#004100"/><rect x="188" y="288" width="7" height="8" fill="#003d00"/><rect x="195" y="288" width="15" height="8" fill="#003900"/><rect x="210" y="288" width="7" height="8" fill="#003500"/><rect x="217" y="288" width="8" height="8" fill="#003100"/><rect x="225" y="288" width="15" height="8" fill="#003500"/><rect x="240" y="288" width="7" height="8" fill="#003100"/><rect x="247" y="288" width="15" height="8" fill="#002900"/><rect x="262" y="288" width="15" height="8" fill="#002500"/><rect x="277" y="288" width="7" height="8" fill="#001d00"/><rect x="284" y="288" width="8" height="8" fill="#001000"/><rect x="292" y="288" width="7" height="8" fill="#000800"/><rect x="299" y="288" width="8" height="8" fill="#000c00"/><rect x="307" y="288" width="14" height="8" fill="#001000"/><rect x="321" y="288" width="30" height="8" fill="#000800"/><rect x="351" y="288" width="15" height="8" fill="#000400"/><rect x="-5" y="296" width="14" height="7" fill="#000400"/><rect x="9" y="296" width="15" height="7" fill="#000800"/><rect x="24" y="296" width="8" height="7" fill="#001400"/><rect x="32" y="296" width="15" height="7" fill="#001900"/><rect x="47" y="296" width="14" height="7" fill="#000c00"/><rect x="61" y="296" width="8" height="7" fill="#001400"/><rect x="69" y="296" width="7" height="7" fill="#001900"/><rect x="76" y="296" width="8" height="7" fill="#002100"/><rect x="84" y="296" width="7" height="7" fill="#001d00"/><rect x="91" y="296" width="8" height="7" fill="#002100"/><rect x="99" y="296" width="7" height="7" fill="#002500"/><rect x="106" y="296" width="22" height="7" fill="#002900"/><rect x="128" y="296" width="37" height="7" fill="#002d00"/><rect x="165" y="296" width="8" height="7" fill="#002900"/><rect x="173" y="296" width="7" height="7" fill="#002d00"/><rect x="180" y="296" width="15" height="7" fill="#003100"/><rect x="195" y="296" width="8" height="7" fill="#002500"/><rect x="203" y="296" width="7" height="7" fill="#002d00"/><rect x="210" y="296" width="7" height="7" fill="#003100"/><rect x="217" y="296" width="15" height="7" fill="#002d00"/><rect x="232" y="296" width="8" height="7" fill="#002500"/><rect x="240" y="296" width="7" height="7" fill="#002100"/><rect x="247" y="296" width="8" height="7" fill="#001d00"/><rect x="255" y="296" width="7" height="7" fill="#002100"/><rect x="262" y="296" width="22" height="7" fill="#001900"/><rect x="284" y="296" width="8" height="7" fill="#001400"/><rect x="292" y="296" width="22" height="7" fill="#000c00"/><rect x="314" y="296" width="7" height="7" fill="#001000"/><rect x="321" y="296" width="15" height="7" fill="#000400"/><rect x="336" y="296" width="8" height="7" fill="#000c00"/><rect x="344" y="296" width="7" height="7" fill="#001400"/><rect x="351" y="296" width="8" height="7" fill="#000c00"/><rect x="359" y="296" width="7" height="7" fill="#001000"/><rect x="-5" y="303" width="7" height="7" fill="#000800"/><rect x="2" y="303" width="7" height="7" fill="#000c00"/><rect x="17" y="303" width="7" height="7" fill="#000400"/><rect x="24" y="303" width="8" height="7" fill="#000c00"/><rect x="32" y="303" width="7" height="7" fill="#001900"/><rect x="39" y="303" width="8" height="7" fill="#001400"/><rect x="47" y="303" width="14" height="7" fill="#000c00"/><rect x="61" y="303" width="8" height="7" fill="#001000"/><rect x="69" y="303" width="15" height="7" fill="#001400"/><rect x="84" y="303" width="15" height="7" fill="#001900"/><rect x="99" y="303" width="7" height="7" fill="#001d00"/><rect x="106" y="303" width="7" height="7" fill="#002100"/><rect x="113" y="303" width="8" height="7" fill="#002500"/><rect x="121" y="303" width="7" height="7" fill="#002100"/><rect x="128" y="303" width="8" height="7" fill="#002900"/><rect x="136" y="303" width="15" height="7" fill="#002500"/><rect x="151" y="303" width="22" height="7" fill="#002900"/><rect x="173" y="303" width="7" height="7" fill="#002500"/><rect x="180" y="303" width="15" height="7" fill="#002d00"/><rect x="195" y="303" width="8" height="7" fill="#002900"/><rect x="203" y="303" width="7" height="7" fill="#002d00"/><rect x="210" y="303" width="15" height="7" fill="#003100"/><rect x="225" y="303" width="7" height="7" fill="#002500"/><rect x="232" y="303" width="8" height="7" fill="#001d00"/><rect x="240" y="303" width="7" height="7" fill="#002100"/><rect x="247" y="303" width="8" height="7" fill="#001d00"/><rect x="255" y="303" width="7" height="7" fill="#001900"/><rect x="262" y="303" width="7" height="7" fill="#001400"/><rect x="269" y="303" width="8" height="7" fill="#001000"/><rect x="277" y="303" width="7" height="7" fill="#001400"/><rect x="284" y="303" width="8" height="7" fill="#001000"/><rect x="292" y="303" width="22" height="7" fill="#000c00"/><rect x="314" y="303" width="7" height="7" fill="#001000"/><rect x="321" y="303" width="8" height="7" fill="#000c00"/><rect x="329" y="303" width="7" height="7" fill="#000800"/><rect x="336" y="303" width="15" height="7" fill="#001000"/><rect x="351" y="303" width="15" height="7" fill="#000c00"/><rect x="-5" y="310" width="14" height="8" fill="#000800"/><rect x="9" y="310" width="15" height="8" fill="#000400"/><rect x="24" y="310" width="15" height="8" fill="#000c00"/><rect x="39" y="310" width="8" height="8" fill="#000800"/><rect x="54" y="310" width="7" height="8" fill="#000800"/><rect x="61" y="310" width="8" height="8" fill="#001400"/><rect x="69" y="310" width="7" height="8" fill="#001000"/><rect x="76" y="310" width="30" height="8" fill="#001400"/><rect x="106" y="310" width="15" height="8" fill="#001d00"/><rect x="121" y="310" width="7" height="8" fill="#002100"/><rect x="128" y="310" width="8" height="8" fill="#002500"/><rect x="136" y="310" width="22" height="8" fill="#002100"/><rect x="158" y="310" width="7" height="8" fill="#002500"/><rect x="165" y="310" width="8" height="8" fill="#002100"/><rect x="173" y="310" width="7" height="8" fill="#001d00"/><rect x="180" y="310" width="8" height="8" fill="#002500"/><rect x="188" y="310" width="7" height="8" fill="#002d00"/><rect x="195" y="310" width="8" height="8" fill="#002500"/><rect x="203" y="310" width="7" height="8" fill="#002100"/><rect x="210" y="310" width="7" height="8" fill="#002900"/><rect x="217" y="310" width="8" height="8" fill="#002500"/><rect x="225" y="310" width="7" height="8" fill="#001900"/><rect x="232" y="310" width="8" height="8" fill="#001d00"/><rect x="240" y="310" width="7" height="8" fill="#002100"/><rect x="247" y="310" width="8" height="8" fill="#001900"/><rect x="255" y="310" width="14" height="8" fill="#001400"/><rect x="269" y="310" width="8" height="8" fill="#001d00"/><rect x="277" y="310" width="22" height="8" fill="#001400"/><rect x="299" y="310" width="8" height="8" fill="#001900"/><rect x="307" y="310" width="7" height="8" fill="#000c00"/><rect x="314" y="310" width="7" height="8" fill="#001000"/><rect x="321" y="310" width="8" height="8" fill="#000c00"/><rect x="329" y="310" width="15" height="8" fill="#000400"/><rect x="344" y="310" width="7" height="8" fill="#000c00"/><rect x="351" y="310" width="8" height="8" fill="#000400"/><rect x="359" y="310" width="7" height="8" fill="#000800"/><rect x="-5" y="318" width="14" height="7" fill="#000800"/><rect x="9" y="318" width="8" height="7" fill="#000c00"/><rect x="17" y="318" width="7" height="7" fill="#001000"/><rect x="24" y="318" width="15" height="7" fill="#000c00"/><rect x="39" y="318" width="8" height="7" fill="#000400"/><rect x="54" y="318" width="7" height="7" fill="#000800"/><rect x="61" y="318" width="8" height="7" fill="#001000"/><rect x="69" y="318" width="30" height="7" fill="#000c00"/><rect x="99" y="318" width="14" height="7" fill="#001400"/><rect x="113" y="318" width="15" height="7" fill="#001000"/><rect x="128" y="318" width="15" height="7" fill="#001400"/><rect x="143" y="318" width="8" height="7" fill="#001d00"/><rect x="151" y="318" width="7" height="7" fill="#001900"/><rect x="158" y="318" width="7" height="7" fill="#001d00"/><rect x="165" y="318" width="8" height="7" fill="#002100"/><rect x="173" y="318" width="7" height="7" fill="#001d00"/><rect x="180" y="318" width="8" height="7" fill="#002900"/><rect x="188" y="318" width="7" height="7" fill="#002500"/><rect x="195" y="318" width="8" height="7" fill="#002100"/><rect x="203" y="318" width="7" height="7" fill="#001900"/><rect x="210" y="318" width="7" height="7" fill="#002500"/><rect x="217" y="318" width="8" height="7" fill="#001900"/><rect x="225" y="318" width="7" height="7" fill="#001400"/><rect x="232" y="318" width="8" height="7" fill="#002100"/><rect x="240" y="318" width="7" height="7" fill="#002500"/><rect x="247" y="318" width="8" height="7" fill="#001900"/><rect x="255" y="318" width="22" height="7" fill="#001000"/><rect x="277" y="318" width="15" height="7" fill="#000800"/><rect x="292" y="318" width="7" height="7" fill="#001000"/><rect x="299" y="318" width="15" height="7" fill="#000c00"/><rect x="314" y="318" width="7" height="7" fill="#000800"/><rect x="321" y="318" width="8" height="7" fill="#001000"/><rect x="329" y="318" width="30" height="7" fill="#000c00"/><rect x="359" y="318" width="7" height="7" fill="#000800"/><rect x="-5" y="325" width="22" height="8" fill="#001000"/><rect x="17" y="325" width="15" height="8" fill="#000800"/><rect x="32" y="325" width="7" height="8" fill="#000400"/><rect x="39" y="325" width="8" height="8" fill="#000c00"/><rect x="47" y="325" width="7" height="8" fill="#000400"/><rect x="54" y="325" width="7" height="8" fill="#000c00"/><rect x="61" y="325" width="8" height="8" fill="#001000"/><rect x="69" y="325" width="15" height="8" fill="#000800"/><rect x="84" y="325" width="7" height="8" fill="#000400"/><rect x="91" y="325" width="8" height="8" fill="#000800"/><rect x="99" y="325" width="7" height="8" fill="#001000"/><rect x="106" y="325" width="7" height="8" fill="#001900"/><rect x="113" y="325" width="8" height="8" fill="#001000"/><rect x="121" y="325" width="7" height="8" fill="#000800"/><rect x="128" y="325" width="8" height="8" fill="#000c00"/><rect x="136" y="325" width="52" height="8" fill="#001400"/><rect x="188" y="325" width="7" height="8" fill="#001d00"/><rect x="195" y="325" width="8" height="8" fill="#001400"/><rect x="203" y="325" width="7" height="8" fill="#001900"/><rect x="210" y="325" width="7" height="8" fill="#002100"/><rect x="217" y="325" width="15" height="8" fill="#001000"/><rect x="232" y="325" width="15" height="8" fill="#001d00"/><rect x="247" y="325" width="8" height="8" fill="#001400"/><rect x="255" y="325" width="14" height="8" fill="#001000"/><rect x="269" y="325" width="8" height="8" fill="#000c00"/><rect x="277" y="325" width="15" height="8" fill="#000800"/><rect x="292" y="325" width="7" height="8" fill="#000400"/><rect x="299" y="325" width="15" height="8" fill="#000c00"/><rect x="314" y="325" width="7" height="8" fill="#000800"/><rect x="321" y="325" width="15" height="8" fill="#000c00"/><rect x="336" y="325" width="30" height="8" fill="#000800"/><rect x="-5" y="333" width="7" height="7" fill="#000800"/><rect x="2" y="333" width="22" height="7" fill="#000c00"/><rect x="24" y="333" width="8" height="7" fill="#000800"/><rect x="32" y="333" width="7" height="7" fill="#000400"/><rect x="39" y="333" width="8" height="7" fill="#000800"/><rect x="47" y="333" width="7" height="7" fill="#000400"/><rect x="54" y="333" width="7" height="7" fill="#000c00"/><rect x="61" y="333" width="8" height="7" fill="#001000"/><rect x="69" y="333" width="7" height="7" fill="#000400"/><rect x="76" y="333" width="8" height="7" fill="#000800"/><rect x="84" y="333" width="7" height="7" fill="#000c00"/><rect x="91" y="333" width="8" height="7" fill="#000800"/><rect x="99" y="333" width="7" height="7" fill="#000c00"/><rect x="106" y="333" width="7" height="7" fill="#001000"/><rect x="113" y="333" width="8" height="7" fill="#001400"/><rect x="121" y="333" width="7" height="7" fill="#001000"/><rect x="128" y="333" width="8" height="7" fill="#001900"/><rect x="136" y="333" width="7" height="7" fill="#001d00"/><rect x="143" y="333" width="8" height="7" fill="#001400"/><rect x="151" y="333" width="7" height="7" fill="#000c00"/><rect x="158" y="333" width="7" height="7" fill="#001000"/><rect x="165" y="333" width="8" height="7" fill="#001900"/><rect x="173" y="333" width="37" height="7" fill="#001400"/><rect x="210" y="333" width="7" height="7" fill="#002100"/><rect x="217" y="333" width="8" height="7" fill="#001400"/><rect x="225" y="333" width="7" height="7" fill="#001000"/><rect x="232" y="333" width="8" height="7" fill="#001900"/><rect x="240" y="333" width="7" height="7" fill="#001400"/><rect x="247" y="333" width="15" height="7" fill="#001000"/><rect x="262" y="333" width="7" height="7" fill="#000c00"/><rect x="269" y="333" width="8" height="7" fill="#001000"/><rect x="277" y="333" width="15" height="7" fill="#000c00"/><rect x="292" y="333" width="15" height="7" fill="#000800"/><rect x="307" y="333" width="7" height="7" fill="#001000"/><rect x="314" y="333" width="7" height="7" fill="#000800"/><rect x="321" y="333" width="30" height="7" fill="#000c00"/><rect x="351" y="333" width="8" height="7" fill="#001400"/><rect x="359" y="333" width="7" height="7" fill="#001000"/><rect x="-5" y="340" width="22" height="8" fill="#000800"/><rect x="17" y="340" width="15" height="8" fill="#001000"/><rect x="32" y="340" width="7" height="8" fill="#000800"/><rect x="39" y="340" width="8" height="8" fill="#000c00"/><rect x="47" y="340" width="7" height="8" fill="#000400"/><rect x="54" y="340" width="15" height="8" fill="#001000"/><rect x="69" y="340" width="7" height="8" fill="#000800"/><rect x="76" y="340" width="8" height="8" fill="#000400"/><rect x="84" y="340" width="15" height="8" fill="#001000"/><rect x="99" y="340" width="7" height="8" fill="#000800"/><rect x="106" y="340" width="7" height="8" fill="#000c00"/><rect x="113" y="340" width="15" height="8" fill="#001400"/><rect x="128" y="340" width="8" height="8" fill="#001d00"/><rect x="136" y="340" width="7" height="8" fill="#002100"/><rect x="143" y="340" width="8" height="8" fill="#001400"/><rect x="151" y="340" width="7" height="8" fill="#000c00"/><rect x="158" y="340" width="7" height="8" fill="#000800"/><rect x="165" y="340" width="23" height="8" fill="#001000"/><rect x="188" y="340" width="7" height="8" fill="#001900"/><rect x="195" y="340" width="15" height="8" fill="#001000"/><rect x="210" y="340" width="15" height="8" fill="#001900"/><rect x="225" y="340" width="7" height="8" fill="#001000"/><rect x="232" y="340" width="8" height="8" fill="#000c00"/><rect x="240" y="340" width="7" height="8" fill="#001000"/><rect x="247" y="340" width="15" height="8" fill="#001400"/><rect x="262" y="340" width="15" height="8" fill="#000c00"/><rect x="277" y="340" width="7" height="8" fill="#000800"/><rect x="284" y="340" width="8" height="8" fill="#000400"/><rect x="292" y="340" width="7" height="8" fill="#000c00"/><rect x="299" y="340" width="15" height="8" fill="#001900"/><rect x="314" y="340" width="37" height="8" fill="#000c00"/><rect x="351" y="340" width="15" height="8" fill="#001000"/><rect x="-5" y="348" width="7" height="7" fill="#000c00"/><rect x="2" y="348" width="7" height="7" fill="#001000"/><rect x="9" y="348" width="8" height="7" fill="#000c00"/><rect x="17" y="348" width="15" height="7" fill="#001000"/><rect x="32" y="348" width="7" height="7" fill="#000800"/><rect x="39" y="348" width="8" height="7" fill="#001000"/><rect x="47" y="348" width="7" height="7" fill="#000c00"/><rect x="54" y="348" width="7" height="7" fill="#001000"/><rect x="61" y="348" width="8" height="7" fill="#001400"/><rect x="69" y="348" width="15" height="7" fill="#000800"/><rect x="84" y="348" width="7" height="7" fill="#001900"/><rect x="91" y="348" width="8" height="7" fill="#001000"/><rect x="99" y="348" width="7" height="7" fill="#000c00"/><rect x="106" y="348" width="7" height="7" fill="#001000"/><rect x="113" y="348" width="8" height="7" fill="#000c00"/><rect x="121" y="348" width="7" height="7" fill="#001000"/><rect x="128" y="348" width="15" height="7" fill="#001400"/><rect x="143" y="348" width="8" height="7" fill="#001000"/><rect x="151" y="348" width="7" height="7" fill="#001400"/><rect x="158" y="348" width="7" height="7" fill="#001000"/><rect x="165" y="348" width="8" height="7" fill="#001400"/><rect x="173" y="348" width="7" height="7" fill="#000800"/><rect x="180" y="348" width="8" height="7" fill="#001000"/><rect x="188" y="348" width="7" height="7" fill="#001400"/><rect x="195" y="348" width="8" height="7" fill="#001000"/><rect x="203" y="348" width="7" height="7" fill="#000c00"/><rect x="210" y="348" width="15" height="7" fill="#001400"/><rect x="225" y="348" width="7" height="7" fill="#000800"/><rect x="232" y="348" width="8" height="7" fill="#000400"/><rect x="240" y="348" width="7" height="7" fill="#000800"/><rect x="247" y="348" width="8" height="7" fill="#001000"/><rect x="255" y="348" width="7" height="7" fill="#001400"/><rect x="262" y="348" width="15" height="7" fill="#000800"/><rect x="292" y="348" width="7" height="7" fill="#000800"/><rect x="299" y="348" width="15" height="7" fill="#000c00"/><rect x="314" y="348" width="7" height="7" fill="#000800"/><rect x="321" y="348" width="8" height="7" fill="#000400"/><rect x="329" y="348" width="22" height="7" fill="#000c00"/><rect x="351" y="348" width="15" height="7" fill="#001000"/><rect x="-5" y="355" width="7" height="7" fill="#000800"/><rect x="2" y="355" width="7" height="7" fill="#000c00"/><rect x="9" y="355" width="8" height="7" fill="#000800"/><rect x="17" y="355" width="22" height="7" fill="#000c00"/><rect x="39" y="355" width="8" height="7" fill="#001000"/><rect x="47" y="355" width="7" height="7" fill="#000c00"/><rect x="54" y="355" width="7" height="7" fill="#001000"/><rect x="61" y="355" width="15" height="7" fill="#000c00"/><rect x="76" y="355" width="8" height="7" fill="#001000"/><rect x="84" y="355" width="7" height="7" fill="#001400"/><rect x="91" y="355" width="8" height="7" fill="#000c00"/><rect x="99" y="355" width="22" height="7" fill="#000400"/><rect x="121" y="355" width="7" height="7" fill="#000800"/><rect x="128" y="355" width="15" height="7" fill="#001000"/><rect x="143" y="355" width="8" height="7" fill="#000800"/><rect x="151" y="355" width="22" height="7" fill="#000c00"/><rect x="173" y="355" width="7" height="7" fill="#000800"/><rect x="180" y="355" width="8" height="7" fill="#000c00"/><rect x="188" y="355" width="7" height="7" fill="#001400"/><rect x="195" y="355" width="8" height="7" fill="#000c00"/><rect x="203" y="355" width="7" height="7" fill="#000800"/><rect x="210" y="355" width="7" height="7" fill="#000c00"/><rect x="217" y="355" width="8" height="7" fill="#001000"/><rect x="225" y="355" width="7" height="7" fill="#000800"/><rect x="232" y="355" width="8" height="7" fill="#000400"/><rect x="240" y="355" width="7" height="7" fill="#000800"/><rect x="247" y="355" width="8" height="7" fill="#000c00"/><rect x="255" y="355" width="7" height="7" fill="#001400"/><rect x="262" y="355" width="7" height="7" fill="#001000"/><rect x="269" y="355" width="8" height="7" fill="#000c00"/><rect x="277" y="355" width="7" height="7" fill="#000400"/><rect x="292" y="355" width="7" height="7" fill="#000c00"/><rect x="299" y="355" width="8" height="7" fill="#000800"/><rect x="307" y="355" width="14" height="7" fill="#000400"/><rect x="329" y="355" width="22" height="7" fill="#000800"/><rect x="351" y="355" width="15" height="7" fill="#001000"/></svg></div><div style="left:345px;top:481px;width:367px;height:361px;overflow:hidden;background:#ffaf00"><svg width="367" height="361" style="position:absolute;left:0;top:0" shape-rendering="crispEdges"><rect x="351" y="6" width="7" height="7" fill="#ffb500"/><rect x="284" y="28" width="7" height="8" fill="#ffb500"/><rect x="105" y="43" width="8" height="7" fill="#ffb500"/><rect x="299" y="43" width="7" height="7" fill="#ffb500"/><rect x="68" y="65" width="8" height="8" fill="#ffb500"/><rect x="246" y="65" width="8" height="8" fill="#ffb500"/><rect x="157" y="73" width="8" height="7" fill="#ffb500"/><rect x="209" y="73" width="8" height="7" fill="#ffb500"/><rect x="239" y="80" width="7" height="8" fill="#ffb500"/><rect x="165" y="88" width="7" height="7" fill="#ffb500"/><rect x="194" y="95" width="15" height="7" fill="#ffb500"/><rect x="172" y="110" width="8" height="7" fill="#ffb500"/><rect x="135" y="117" width="7" height="8" fill="#ffb500"/><rect x="150" y="117" width="7" height="8" fill="#ffb500"/><rect x="157" y="117" width="8" height="8" fill="#ffb400"/><rect x="180" y="117" width="7" height="8" fill="#ffb400"/><rect x="224" y="117" width="8" height="8" fill="#ffb500"/><rect x="261" y="117" width="8" height="8" fill="#ffb500"/><rect x="358" y="117" width="7" height="8" fill="#ffb500"/><rect x="157" y="125" width="8" height="7" fill="#ffb400"/><rect x="172" y="125" width="8" height="7" fill="#ffb300"/><rect x="202" y="125" width="15" height="7" fill="#ffb400"/><rect x="224" y="125" width="8" height="7" fill="#ffb500"/><rect x="246" y="125" width="8" height="7" fill="#ffb500"/><rect x="142" y="132" width="8" height="8" fill="#ffb300"/><rect x="157" y="132" width="23" height="8" fill="#ffab00"/><rect x="180" y="132" width="7" height="8" fill="#ffb100"/><rect x="187" y="132" width="15" height="8" fill="#ffab00"/><rect x="224" y="132" width="8" height="8" fill="#ffb400"/><rect x="83" y="140" width="7" height="7" fill="#ffb500"/><rect x="142" y="140" width="8" height="7" fill="#ffb200"/><rect x="150" y="140" width="7" height="7" fill="#ffaa00"/><rect x="165" y="140" width="7" height="7" fill="#ffb400"/><rect x="172" y="140" width="8" height="7" fill="#ffad00"/><rect x="180" y="140" width="7" height="7" fill="#ffa600"/><rect x="187" y="140" width="7" height="7" fill="#ffae00"/><rect x="194" y="140" width="8" height="7" fill="#ffa800"/><rect x="202" y="140" width="7" height="7" fill="#ffaa00"/><rect x="209" y="140" width="8" height="7" fill="#ffab00"/><rect x="90" y="147" width="8" height="7" fill="#ffb500"/><rect x="120" y="147" width="8" height="7" fill="#ffb400"/><rect x="135" y="147" width="7" height="7" fill="#ffb200"/><rect x="142" y="147" width="8" height="7" fill="#ffb000"/><rect x="150" y="147" width="7" height="7" fill="#ffa600"/><rect x="157" y="147" width="8" height="7" fill="#ffa900"/><rect x="165" y="147" width="7" height="7" fill="#ffac00"/><rect x="172" y="147" width="8" height="7" fill="#ff9b00"/><rect x="180" y="147" width="7" height="7" fill="#ffa900"/><rect x="187" y="147" width="7" height="7" fill="#ffb300"/><rect x="194" y="147" width="8" height="7" fill="#ffa900"/><rect x="202" y="147" width="7" height="7" fill="#ffad00"/><rect x="209" y="147" width="8" height="7" fill="#ffa900"/><rect x="217" y="147" width="7" height="7" fill="#ffb200"/><rect x="224" y="147" width="8" height="7" fill="#ffb300"/><rect x="16" y="154" width="8" height="8" fill="#ffb500"/><rect x="113" y="154" width="7" height="8" fill="#ffb400"/><rect x="128" y="154" width="7" height="8" fill="#ffab00"/><rect x="135" y="154" width="7" height="8" fill="#ffb600"/><rect x="142" y="154" width="8" height="8" fill="#ffb900"/><rect x="150" y="154" width="7" height="8" fill="#ffa500"/><rect x="157" y="154" width="8" height="8" fill="#ffa300"/><rect x="165" y="154" width="7" height="8" fill="#ff9900"/><rect x="172" y="154" width="8" height="8" fill="#ffbf00"/><rect x="180" y="154" width="7" height="8" fill="#ff9a00"/><rect x="187" y="154" width="7" height="8" fill="#ffa900"/><rect x="194" y="154" width="8" height="8" fill="#ffaa00"/><rect x="202" y="154" width="7" height="8" fill="#ffc000"/><rect x="209" y="154" width="8" height="8" fill="#ffac00"/><rect x="217" y="154" width="7" height="8" fill="#ffb000"/><rect x="224" y="154" width="8" height="8" fill="#ffab00"/><rect x="53" y="162" width="8" height="7" fill="#ffb500"/><rect x="83" y="162" width="7" height="7" fill="#ffb500"/><rect x="98" y="162" width="7" height="7" fill="#ffb500"/><rect x="105" y="162" width="8" height="7" fill="#ffba00"/><rect x="120" y="162" width="8" height="7" fill="#ffb900"/><rect x="128" y="162" width="7" height="7" fill="#ffb700"/><rect x="135" y="162" width="7" height="7" fill="#ffb300"/><rect x="142" y="162" width="8" height="7" fill="#ffc400"/><rect x="150" y="162" width="7" height="7" fill="#ffc100"/><rect x="157" y="162" width="8" height="7" fill="#ffbc00"/><rect x="165" y="162" width="7" height="7" fill="#ffaa00"/><rect x="172" y="162" width="8" height="7" fill="#ff8200"/><rect x="180" y="162" width="7" height="7" fill="#ff9c00"/><rect x="187" y="162" width="7" height="7" fill="#ff9300"/><rect x="194" y="162" width="8" height="7" fill="#ffb000"/><rect x="202" y="162" width="7" height="7" fill="#ffab00"/><rect x="209" y="162" width="8" height="7" fill="#ffa500"/><rect x="217" y="162" width="7" height="7" fill="#ffb300"/><rect x="224" y="162" width="8" height="7" fill="#ffb100"/><rect x="232" y="162" width="7" height="7" fill="#ffbf00"/><rect x="61" y="169" width="7" height="8" fill="#ffb500"/><rect x="120" y="169" width="8" height="8" fill="#ffb200"/><rect x="128" y="169" width="7" height="8" fill="#ffb500"/><rect x="135" y="169" width="7" height="8" fill="#ffb600"/><rect x="142" y="169" width="8" height="8" fill="#ffb200"/><rect x="150" y="169" width="7" height="8" fill="#ffa700"/><rect x="157" y="169" width="8" height="8" fill="#ff9c00"/><rect x="165" y="169" width="7" height="8" fill="#ff9d00"/><rect x="172" y="169" width="8" height="8" fill="#ffa900"/><rect x="180" y="169" width="7" height="8" fill="#ff7f00"/><rect x="187" y="169" width="7" height="8" fill="#ff8700"/><rect x="194" y="169" width="8" height="8" fill="#ffbd00"/><rect x="202" y="169" width="7" height="8" fill="#ffc200"/><rect x="209" y="169" width="8" height="8" fill="#ffb500"/><rect x="217" y="169" width="7" height="8" fill="#ffa200"/><rect x="224" y="169" width="8" height="8" fill="#ffa800"/><rect x="232" y="169" width="7" height="8" fill="#ffab00"/><rect x="261" y="169" width="8" height="8" fill="#ffb500"/><rect x="24" y="177" width="7" height="7" fill="#ffb500"/><rect x="68" y="177" width="8" height="7" fill="#ffb500"/><rect x="105" y="177" width="8" height="7" fill="#ffb400"/><rect x="113" y="177" width="7" height="7" fill="#ffb300"/><rect x="120" y="177" width="8" height="7" fill="#ffb800"/><rect x="128" y="177" width="7" height="7" fill="#ffa700"/><rect x="135" y="177" width="7" height="7" fill="#ffba00"/><rect x="142" y="177" width="8" height="7" fill="#ffac00"/><rect x="150" y="177" width="7" height="7" fill="#ff9300"/><rect x="157" y="177" width="8" height="7" fill="#ff7300"/><rect x="165" y="177" width="7" height="7" fill="#ffc000"/><rect x="172" y="177" width="8" height="7" fill="#ffa800"/><rect x="180" y="177" width="7" height="7" fill="#ff8c00"/><rect x="187" y="177" width="7" height="7" fill="#ffd300"/><rect x="194" y="177" width="8" height="7" fill="#ffc100"/><rect x="202" y="177" width="7" height="7" fill="#ffa400"/><rect x="209" y="177" width="8" height="7" fill="#ffb000"/><rect x="217" y="177" width="7" height="7" fill="#ffac00"/><rect x="224" y="177" width="8" height="7" fill="#ffa700"/><rect x="232" y="177" width="7" height="7" fill="#ffab00"/><rect x="261" y="177" width="8" height="7" fill="#ffb500"/><rect x="336" y="177" width="7" height="7" fill="#ffb500"/><rect x="61" y="184" width="7" height="8" fill="#ffb500"/><rect x="90" y="184" width="8" height="8" fill="#ffb500"/><rect x="120" y="184" width="8" height="8" fill="#ffab00"/><rect x="128" y="184" width="7" height="8" fill="#ffbe00"/><rect x="135" y="184" width="7" height="8" fill="#ffb000"/><rect x="142" y="184" width="8" height="8" fill="#ff9e00"/><rect x="150" y="184" width="7" height="8" fill="#ff8200"/><rect x="157" y="184" width="8" height="8" fill="#ffa900"/><rect x="165" y="184" width="7" height="8" fill="#ff9800"/><rect x="172" y="184" width="8" height="8" fill="#000000"/><rect x="180" y="184" width="7" height="8" fill="#ffd000"/><rect x="187" y="184" width="7" height="8" fill="#ff8000"/><rect x="194" y="184" width="8" height="8" fill="#ff7000"/><rect x="202" y="184" width="7" height="8" fill="#ffbd00"/><rect x="209" y="184" width="8" height="8" fill="#ff8a00"/><rect x="217" y="184" width="7" height="8" fill="#ffb000"/><rect x="224" y="184" width="8" height="8" fill="#ffad00"/><rect x="232" y="184" width="7" height="8" fill="#ffab00"/><rect x="239" y="184" width="7" height="8" fill="#ffb300"/><rect x="98" y="192" width="7" height="7" fill="#ffb500"/><rect x="120" y="192" width="8" height="7" fill="#ffab00"/><rect x="128" y="192" width="7" height="7" fill="#ffba00"/><rect x="135" y="192" width="7" height="7" fill="#ffc600"/><rect x="142" y="192" width="8" height="7" fill="#ffb700"/><rect x="150" y="192" width="7" height="7" fill="#ff9500"/><rect x="157" y="192" width="8" height="7" fill="#ff5000"/><rect x="165" y="192" width="7" height="7" fill="#ff7a00"/><rect x="172" y="192" width="8" height="7" fill="#ff9800"/><rect x="180" y="192" width="14" height="7" fill="#ffe000"/><rect x="194" y="192" width="8" height="7" fill="#ffce00"/><rect x="202" y="192" width="7" height="7" fill="#ff9500"/><rect x="209" y="192" width="8" height="7" fill="#ff9c00"/><rect x="217" y="192" width="7" height="7" fill="#ffa900"/><rect x="224" y="192" width="8" height="7" fill="#ffb300"/><rect x="232" y="192" width="7" height="7" fill="#ffab00"/><rect x="358" y="192" width="7" height="7" fill="#ffb500"/><rect x="90" y="199" width="8" height="7" fill="#ffb500"/><rect x="120" y="199" width="8" height="7" fill="#ffb200"/><rect x="128" y="199" width="7" height="7" fill="#ffa700"/><rect x="135" y="199" width="7" height="7" fill="#ffbd00"/><rect x="142" y="199" width="8" height="7" fill="#ffb800"/><rect x="150" y="199" width="7" height="7" fill="#ffaa00"/><rect x="157" y="199" width="8" height="7" fill="#ff8700"/><rect x="165" y="199" width="7" height="7" fill="#ff9800"/><rect x="172" y="199" width="8" height="7" fill="#ffff00"/><rect x="180" y="199" width="7" height="7" fill="#ffe800"/><rect x="187" y="199" width="15" height="7" fill="#ffe000"/><rect x="202" y="199" width="7" height="7" fill="#ffa400"/><rect x="209" y="199" width="8" height="7" fill="#ffa300"/><rect x="217" y="199" width="7" height="7" fill="#ffa500"/><rect x="224" y="199" width="8" height="7" fill="#ffae00"/><rect x="232" y="199" width="7" height="7" fill="#ffb200"/><rect x="246" y="199" width="8" height="7" fill="#ffb400"/><rect x="254" y="199" width="7" height="7" fill="#ffb500"/><rect x="120" y="206" width="8" height="8" fill="#ffab00"/><rect x="128" y="206" width="7" height="8" fill="#ffb500"/><rect x="135" y="206" width="7" height="8" fill="#ffc000"/><rect x="142" y="206" width="8" height="8" fill="#ffb800"/><rect x="150" y="206" width="7" height="8" fill="#ffbc00"/><rect x="157" y="206" width="8" height="8" fill="#ff8f00"/><rect x="165" y="206" width="7" height="8" fill="#ff8700"/><rect x="172" y="206" width="8" height="8" fill="#ff8d00"/><rect x="180" y="206" width="7" height="8" fill="#ffa900"/><rect x="194" y="206" width="8" height="8" fill="#ffb400"/><rect x="202" y="206" width="7" height="8" fill="#ffc200"/><rect x="209" y="206" width="8" height="8" fill="#ffa300"/><rect x="217" y="206" width="7" height="8" fill="#ffb600"/><rect x="224" y="206" width="8" height="8" fill="#ffb500"/><rect x="232" y="206" width="7" height="8" fill="#ffb200"/><rect x="239" y="206" width="7" height="8" fill="#ffb400"/><rect x="128" y="214" width="7" height="7" fill="#ffbd00"/><rect x="135" y="214" width="7" height="7" fill="#ffba00"/><rect x="142" y="214" width="8" height="7" fill="#ffb300"/><rect x="150" y="214" width="7" height="7" fill="#ffa600"/><rect x="157" y="214" width="8" height="7" fill="#ff9900"/><rect x="165" y="214" width="7" height="7" fill="#ff8300"/><rect x="172" y="214" width="8" height="7" fill="#ffb400"/><rect x="180" y="214" width="7" height="7" fill="#ffbd00"/><rect x="187" y="214" width="7" height="7" fill="#ffc900"/><rect x="194" y="214" width="8" height="7" fill="#ffa700"/><rect x="202" y="214" width="7" height="7" fill="#ffac00"/><rect x="209" y="214" width="8" height="7" fill="#ffb900"/><rect x="217" y="214" width="7" height="7" fill="#ffa600"/><rect x="224" y="214" width="8" height="7" fill="#ffaa00"/><rect x="232" y="214" width="7" height="7" fill="#ffb900"/><rect x="269" y="214" width="7" height="7" fill="#ffb500"/><rect x="128" y="221" width="7" height="8" fill="#ffab00"/><rect x="135" y="221" width="7" height="8" fill="#ffb000"/><rect x="142" y="221" width="15" height="8" fill="#ffac00"/><rect x="157" y="221" width="8" height="8" fill="#ffaa00"/><rect x="165" y="221" width="7" height="8" fill="#ff9900"/><rect x="172" y="221" width="8" height="8" fill="#ffb200"/><rect x="180" y="221" width="7" height="8" fill="#ffbc00"/><rect x="187" y="221" width="7" height="8" fill="#ffb800"/><rect x="194" y="221" width="8" height="8" fill="#ffbc00"/><rect x="202" y="221" width="7" height="8" fill="#ffb700"/><rect x="209" y="221" width="8" height="8" fill="#ffa500"/><rect x="217" y="221" width="7" height="8" fill="#ffb000"/><rect x="224" y="221" width="8" height="8" fill="#ffbe00"/><rect x="276" y="221" width="8" height="8" fill="#ffb500"/><rect x="31" y="229" width="7" height="7" fill="#ffb500"/><rect x="113" y="229" width="7" height="7" fill="#ffb500"/><rect x="120" y="229" width="8" height="7" fill="#ffb400"/><rect x="135" y="229" width="7" height="7" fill="#ffab00"/><rect x="142" y="229" width="8" height="7" fill="#ffa900"/><rect x="150" y="229" width="7" height="7" fill="#ffad00"/><rect x="157" y="229" width="8" height="7" fill="#ffca00"/><rect x="165" y="229" width="7" height="7" fill="#ffa500"/><rect x="172" y="229" width="15" height="7" fill="#ffb000"/><rect x="187" y="229" width="7" height="7" fill="#ff9e00"/><rect x="194" y="229" width="8" height="7" fill="#ffa900"/><rect x="202" y="229" width="7" height="7" fill="#ffad00"/><rect x="209" y="229" width="8" height="7" fill="#ffb000"/><rect x="217" y="229" width="7" height="7" fill="#ffab00"/><rect x="232" y="229" width="7" height="7" fill="#ffb400"/><rect x="239" y="229" width="7" height="7" fill="#ffba00"/><rect x="90" y="236" width="8" height="8" fill="#ffb500"/><rect x="120" y="236" width="8" height="8" fill="#ffb400"/><rect x="142" y="236" width="8" height="8" fill="#ffb200"/><rect x="150" y="236" width="7" height="8" fill="#ffb700"/><rect x="165" y="236" width="7" height="8" fill="#ffa700"/><rect x="172" y="236" width="8" height="8" fill="#ffad00"/><rect x="180" y="236" width="7" height="8" fill="#ffb300"/><rect x="187" y="236" width="7" height="8" fill="#ffa700"/><rect x="202" y="236" width="7" height="8" fill="#ffaa00"/><rect x="209" y="236" width="8" height="8" fill="#ffb200"/><rect x="232" y="236" width="7" height="8" fill="#ffb400"/><rect x="239" y="236" width="15" height="8" fill="#ffb500"/><rect x="321" y="236" width="7" height="8" fill="#ffb500"/><rect x="120" y="244" width="8" height="7" fill="#ffb500"/><rect x="135" y="244" width="7" height="7" fill="#ffb400"/><rect x="157" y="244" width="23" height="7" fill="#ffab00"/><rect x="180" y="244" width="7" height="7" fill="#ffbe00"/><rect x="187" y="244" width="7" height="7" fill="#ffb800"/><rect x="194" y="244" width="8" height="7" fill="#ffab00"/><rect x="68" y="251" width="8" height="8" fill="#ffb500"/><rect x="128" y="251" width="7" height="8" fill="#ffb500"/><rect x="165" y="251" width="7" height="8" fill="#ffb300"/><rect x="187" y="251" width="7" height="8" fill="#ffb300"/><rect x="142" y="259" width="8" height="7" fill="#ffb500"/><rect x="202" y="259" width="22" height="7" fill="#ffb500"/><rect x="38" y="266" width="8" height="7" fill="#ffb500"/><rect x="135" y="266" width="7" height="7" fill="#ffb500"/><rect x="202" y="266" width="7" height="7" fill="#ffb500"/><rect x="113" y="273" width="7" height="8" fill="#ffb500"/><rect x="165" y="281" width="7" height="7" fill="#ffbb00"/><rect x="224" y="281" width="8" height="7" fill="#ffb500"/><rect x="202" y="288" width="15" height="8" fill="#ffb500"/><rect x="157" y="296" width="8" height="7" fill="#ffb500"/><rect x="157" y="303" width="8" height="8" fill="#ffb500"/><rect x="202" y="303" width="7" height="8" fill="#ffb500"/><rect x="135" y="311" width="7" height="7" fill="#ffb500"/><rect x="157" y="318" width="8" height="7" fill="#ffb500"/><rect x="135" y="325" width="7" height="8" fill="#ffb500"/><rect x="284" y="325" width="7" height="8" fill="#ffb500"/><rect x="269" y="333" width="7" height="7" fill="#ffb500"/><rect x="358" y="340" width="7" height="8" fill="#ffb500"/><rect x="180" y="348" width="7" height="7" fill="#ffb500"/><rect x="254" y="355" width="7" height="8" fill="#ffb500"/></svg></div>
</body></html>
